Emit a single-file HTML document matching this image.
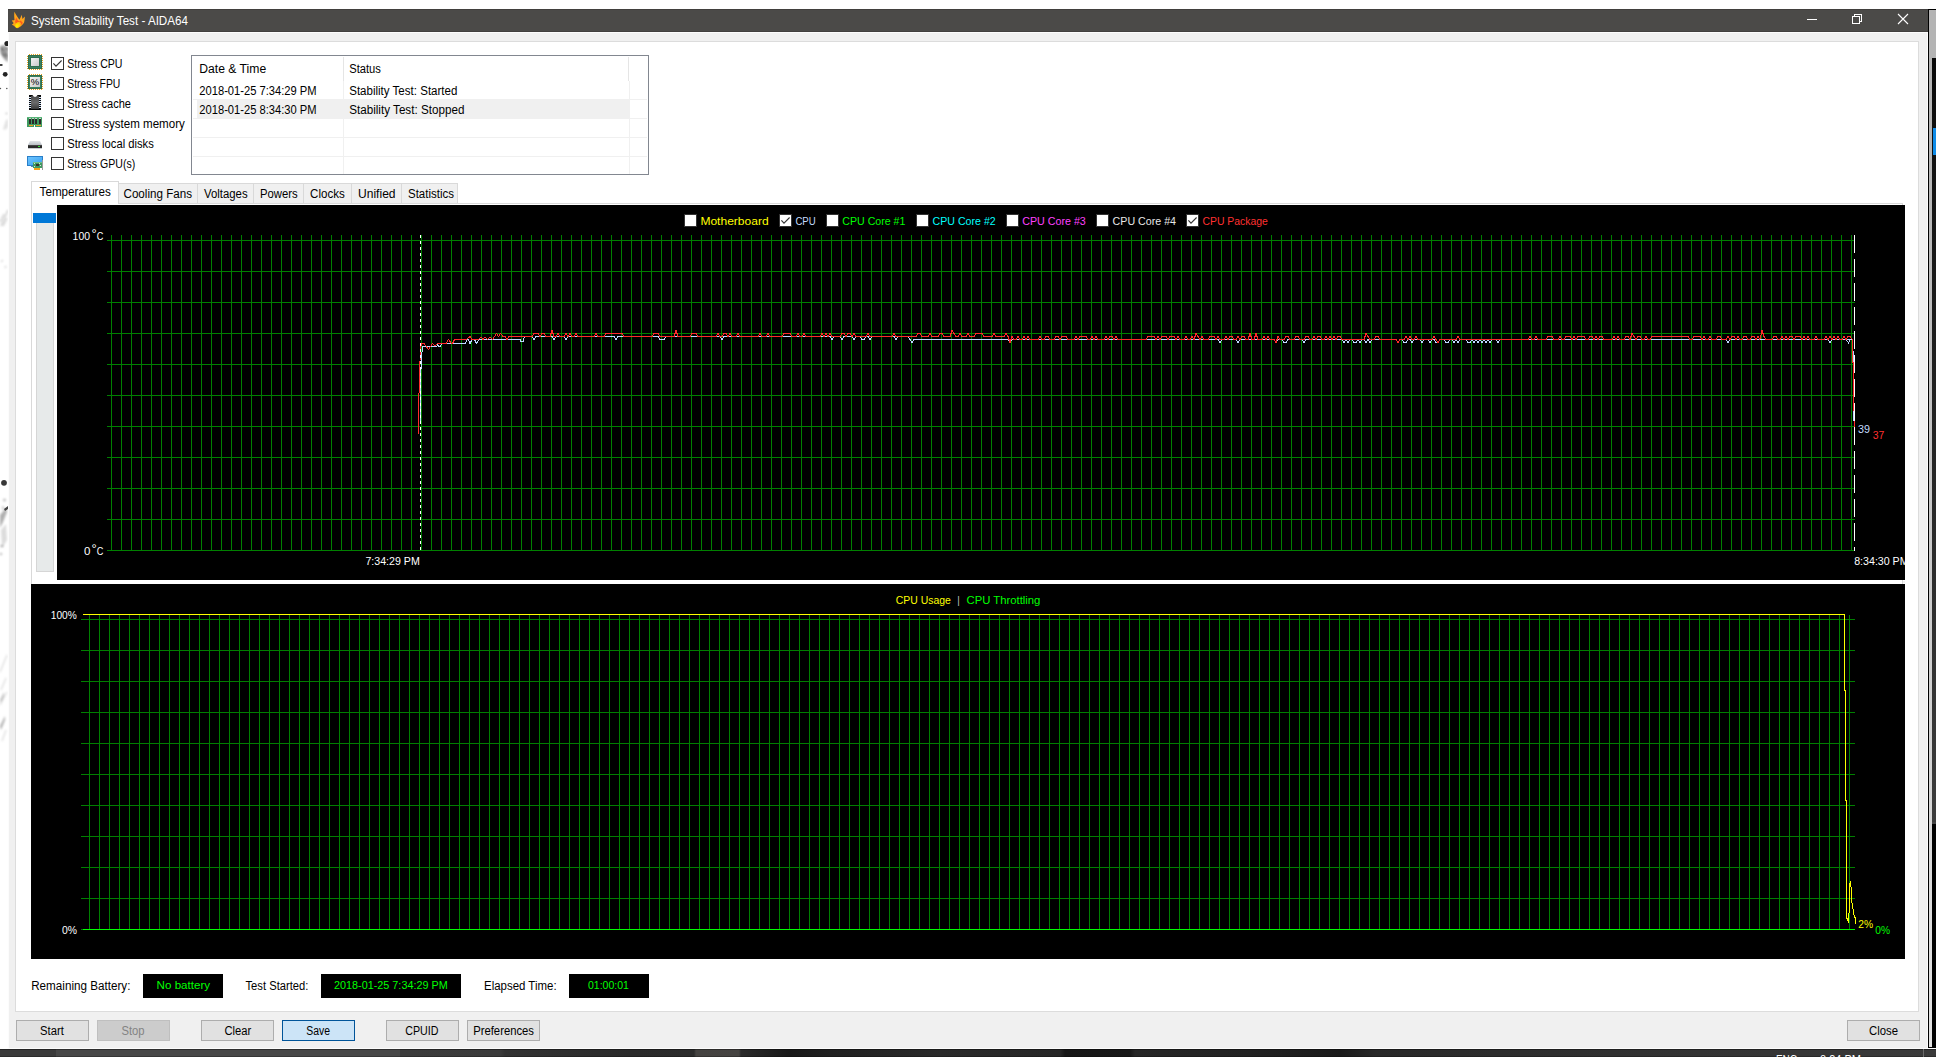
<!DOCTYPE html>
<html><head><meta charset="utf-8"><title>System Stability Test - AIDA64</title>
<style>
html,body{margin:0;padding:0;background:#fff;overflow:hidden}
svg{display:block;font-family:"Liberation Sans",sans-serif}
text{white-space:pre}
</style></head><body>
<svg width="1936" height="1058" viewBox="0 0 1936 1058" shape-rendering="crispEdges">
<rect x="0" y="0" width="1936" height="1058" fill="#ffffff"/>
<defs><filter id="bl" x="-50%" y="-50%" width="200%" height="200%"><feGaussianBlur stdDeviation="0.45"/></filter><filter id="bl2" x="-50%" y="-50%" width="200%" height="200%"><feGaussianBlur stdDeviation="0.8"/></filter></defs>
<g shape-rendering="auto">
<g filter="url(#bl2)">
<path d="M0 46 L4 45 L8 48 L8 62 L5 60 L2 56 L0 52Z" fill="#8a8a8a" opacity="0.8"/>
<path d="M1 48 L4 51 M5 53 L8 57 M2 53 L5 57 M6 47 L8 50" stroke="#3c3c3c" stroke-width="1.2" fill="none" opacity="0.8"/>
<path d="M0 515 L6 508 L7 512 L3 522 L0 528Z" fill="#9c9c9c" opacity="0.8"/>
<path d="M1 530 L6 524 L7 540 L2 548Z" fill="#dcdcdc"/>
<ellipse cx="4.5" cy="500" rx="1.4" ry="1.6" fill="#bdbdbd"/><ellipse cx="3" cy="508" rx="1" ry="2.2" fill="#c8c8c8"/>
<ellipse cx="2" cy="546" rx="1.6" ry="1" fill="#9a9a9a"/><ellipse cx="1" cy="554" rx="1.2" ry="1" fill="#aaa"/>
<path d="M3 129 L6 120 L8 119 L8 127 L5 130Z" fill="#e2e2e2"/>
<circle cx="6.5" cy="113.5" r="0.8" fill="#9a9a9a"/>
<path d="M1 226 L8 210 M0 222 L4 214 M3 226 L7 218" stroke="#8c8c8c" stroke-width="0.8" fill="none" opacity="0.8"/>
<path d="M1 262 L3 260 M5 268 L6 266" stroke="#aaa" stroke-width="0.8" fill="none"/>
<path d="M0 672 L7 655 M1 690 L6 678 M0 705 L7 692 M2 741 L6 730" stroke="#bdbdbd" stroke-width="0.7" fill="none"/>
<path d="M0 726 L5 716 L5 720 L1 730Z" fill="#9a9a9a" opacity="0.8"/>
<path d="M0 700 L4 692 L4 696 L1 703Z" fill="#b0b0b0" opacity="0.8"/>
</g>
<g filter="url(#bl)">
<circle cx="7" cy="43.5" r="2.6" fill="#222"/>
<ellipse cx="1" cy="65" rx="1.8" ry="1" fill="#333"/>
<circle cx="5.2" cy="74.3" r="2.4" fill="#222"/>
<circle cx="0.4" cy="88.5" r="0.8" fill="#555"/><circle cx="6.8" cy="88.5" r="0.8" fill="#555"/>
<circle cx="4" cy="482.8" r="2.9" fill="#383838"/>
<path d="M4 509 L8 506 L8 509 L5 511Z" fill="#444"/>
</g>
</g>
<defs><linearGradient id="rs1" gradientUnits="userSpaceOnUse" x1="0" y1="58" x2="0" y2="822"><stop offset="0" stop-color="#080808"/><stop offset="0.12" stop-color="#111111"/><stop offset="1" stop-color="#3c3c3c"/></linearGradient><linearGradient id="rs2" gradientUnits="userSpaceOnUse" x1="0" y1="10" x2="0" y2="1047"><stop offset="0" stop-color="#b2b2b2"/><stop offset="0.2" stop-color="#b8b8b8"/><stop offset="1" stop-color="#e2e2e2"/></linearGradient></defs>
<rect x="1928" y="9" width="8" height="1039" fill="#000000"/>
<rect x="1929" y="10" width="7" height="48" fill="#b4b4b4"/>
<rect x="1929" y="58" width="3" height="989" fill="url(#rs2)"/>
<rect x="1932" y="58" width="4" height="764" fill="url(#rs1)"/>
<rect x="1932" y="822" width="4" height="2" fill="#454545"/>
<rect x="1933" y="128" width="3" height="27" fill="#0f8ce8"/>
<defs><linearGradient id="tbg" gradientUnits="userSpaceOnUse" x1="0" y1="0" x2="1936" y2="0"><stop offset="0.00000" stop-color="#3a3a3a"/><stop offset="0.02893" stop-color="#3a3a3a"/><stop offset="0.02898" stop-color="#474747"/><stop offset="0.20661" stop-color="#474747"/><stop offset="0.20666" stop-color="#3b3b3b"/><stop offset="0.25826" stop-color="#3a3a3a"/><stop offset="0.26085" stop-color="#323232"/><stop offset="0.29184" stop-color="#2e2e2e"/><stop offset="0.32541" stop-color="#2a2a2a"/><stop offset="0.35847" stop-color="#2b2b2b"/><stop offset="0.35950" stop-color="#444240"/><stop offset="0.38171" stop-color="#454341"/><stop offset="0.38275" stop-color="#2a2a2a"/><stop offset="0.40806" stop-color="#181818"/><stop offset="0.42872" stop-color="#202020"/><stop offset="0.48554" stop-color="#2a2a2a"/><stop offset="0.54752" stop-color="#262626"/><stop offset="0.55010" stop-color="#161616"/><stop offset="0.58368" stop-color="#181818"/><stop offset="0.58626" stop-color="#262626"/><stop offset="0.64566" stop-color="#222222"/><stop offset="0.69215" stop-color="#1a1a1a"/><stop offset="0.71023" stop-color="#282828"/><stop offset="0.87810" stop-color="#333333"/><stop offset="1.00000" stop-color="#3a3a3a"/></linearGradient></defs>
<rect x="0" y="1049" width="1936" height="8" fill="url(#tbg)"/>
<rect x="0" y="1049" width="1936" height="1" fill="#000000" opacity="0.35"/>
<rect x="0" y="1056" width="1936" height="1" fill="#000000" opacity="0.25"/>
<rect x="1923" y="1049" width="1" height="8" fill="#6a6a6a"/>
<clipPath id="tb"><rect x="0" y="1049" width="1936" height="8"/></clipPath>
<g clip-path="url(#tb)" shape-rendering="auto">
<text x="1776" y="1064" font-size="12.5" fill="#fff" textLength="21.5" lengthAdjust="spacingAndGlyphs">ENG</text>
<text x="1820" y="1064" font-size="12.5" fill="#fff" textLength="41" lengthAdjust="spacingAndGlyphs">8:34 PM</text>
</g>
<rect x="8" y="9" width="1920" height="23" fill="#4b4a48"/>
<rect x="8" y="9" width="1920" height="1" fill="#413f3d"/>
<rect x="8" y="31" width="1920" height="1" fill="#413f3d"/>
<rect x="8" y="32" width="1920" height="1017" fill="#fcfcfc"/>
<rect x="9" y="33" width="1918" height="1015" fill="#f0f0f0"/>
<rect x="15" y="41" width="1904" height="971" fill="#dcdcdc"/>
<rect x="16" y="42" width="1902" height="969" fill="#ffffff"/>
<g shape-rendering="auto">
<defs><radialGradient id="fl" gradientUnits="userSpaceOnUse" cx="16.9" cy="26.3" r="5.2"><stop offset="0" stop-color="#fff200"/><stop offset="0.45" stop-color="#ffd400"/><stop offset="1" stop-color="#ffa61a"/></radialGradient><filter id="fb" x="-20%" y="-20%" width="140%" height="140%"><feGaussianBlur stdDeviation="0.35"/></filter></defs>
<g filter="url(#fb)">
<path d="M14.3 11.7 C15.4 13.4 16.2 15 17.2 16.6 C18 17.8 18.8 18.8 19.4 19.7 C20.2 18.4 21 16.6 21.6 14.8 C22 16.4 22.2 17.8 22.5 19 C23.2 18 24 17.2 24.9 16.5 C24.8 18.6 24.6 20.6 24.1 22.5 C23.2 24.4 21.4 26 19.4 27.2 C18.4 27.9 17.3 28.3 16.5 28.1 C15.4 27.5 14.6 26.6 14 25.8 C13.2 25.6 12.5 25.1 11.8 24.5 C12.6 24.2 13.2 23.6 13.6 22.9 C12.8 22.2 12.2 21.3 11.8 20.3 C12.8 20.5 13.7 20.4 14.5 20 C14.2 17.4 14 14.6 14.3 11.7Z" fill="#ffa51c"/>
<path d="M16.2 17.6 C16.9 19.2 18 20.6 19.2 21.6 C20 21.4 20.6 20.8 21 20.2 C21.2 21.2 21.6 21.8 22.4 22 C22.8 22.6 22.6 23.4 22 24.2 C20.8 25 19 25.4 17.4 25 C16 24.4 15.2 23.2 15.2 21.6 C15.3 20.2 15.7 18.8 16.2 17.6Z" fill="#ff5a1a"/>
<path d="M17.6 22.2 C19 21.8 20.6 22.4 21 23.4 C21 24.6 20 25.8 18.8 26.8 C17.8 27.6 16.9 28 16.4 27.8 C15.6 27.2 15.1 26.2 15.2 25.2 C15.6 23.8 16.4 22.6 17.6 22.2Z" fill="url(#fl)"/>
</g>
</g>
<g shape-rendering="auto">
<text x="31" y="24.6" font-size="12.5" fill="#ffffff" textLength="157" lengthAdjust="spacingAndGlyphs">System Stability Test - AIDA64</text>
</g>
<rect x="1807" y="19" width="10" height="1" fill="#ffffff"/>
<g fill="none" stroke="#ffffff" stroke-width="1">
<rect x="1852.5" y="16.5" width="7" height="7"/>
<path d="M1854.5 16.5 V14.5 H1861.5 V21.5 H1859.5"/>
</g>
<g shape-rendering="auto"><path d="M1898 14 L1908 24 M1908 14 L1898 24" stroke="#ffffff" stroke-width="1.1" fill="none"/></g>
<rect x="51" y="57" width="13" height="13" fill="#333333"/>
<rect x="52" y="58" width="11" height="11" fill="#ffffff"/>
<g shape-rendering="auto"><path d="M53.4 63.3 L56 66.2 L61.6 60.5" fill="none" stroke="#333" stroke-width="1.1"/></g>
<g shape-rendering="auto">
<text x="67.2" y="68" font-size="12.5" fill="#000" textLength="55.3" lengthAdjust="spacingAndGlyphs">Stress CPU</text>
</g>
<rect x="51" y="77" width="13" height="13" fill="#333333"/>
<rect x="52" y="78" width="11" height="11" fill="#ffffff"/>
<g shape-rendering="auto">
<text x="67.2" y="88" font-size="12.5" fill="#000" textLength="53.2" lengthAdjust="spacingAndGlyphs">Stress FPU</text>
</g>
<rect x="51" y="97" width="13" height="13" fill="#333333"/>
<rect x="52" y="98" width="11" height="11" fill="#ffffff"/>
<g shape-rendering="auto">
<text x="67.2" y="108" font-size="12.5" fill="#000" textLength="63.8" lengthAdjust="spacingAndGlyphs">Stress cache</text>
</g>
<rect x="51" y="117" width="13" height="13" fill="#333333"/>
<rect x="52" y="118" width="11" height="11" fill="#ffffff"/>
<g shape-rendering="auto">
<text x="67.2" y="128" font-size="12.5" fill="#000" textLength="117.6" lengthAdjust="spacingAndGlyphs">Stress system memory</text>
</g>
<rect x="51" y="137" width="13" height="13" fill="#333333"/>
<rect x="52" y="138" width="11" height="11" fill="#ffffff"/>
<g shape-rendering="auto">
<text x="67.2" y="148" font-size="12.5" fill="#000" textLength="86.6" lengthAdjust="spacingAndGlyphs">Stress local disks</text>
</g>
<rect x="51" y="157" width="13" height="13" fill="#333333"/>
<rect x="52" y="158" width="11" height="11" fill="#ffffff"/>
<g shape-rendering="auto">
<text x="67.2" y="168" font-size="12.5" fill="#000" textLength="68" lengthAdjust="spacingAndGlyphs">Stress GPU(s)</text>
</g>
<defs><linearGradient id="sil" x1="0" y1="0" x2="1" y2="1"><stop offset="0" stop-color="#f4f4f4"/><stop offset="1" stop-color="#c9c9c9"/></linearGradient><linearGradient id="chipg" x1="0" y1="0" x2="0" y2="1"><stop offset="0" stop-color="#4a4a4a"/><stop offset="0.5" stop-color="#6a6a6a"/><stop offset="1" stop-color="#3c3c3c"/></linearGradient><linearGradient id="mon" x1="0" y1="0" x2="1" y2="1"><stop offset="0" stop-color="#6cc4ff"/><stop offset="1" stop-color="#3aa0f0"/></linearGradient><linearGradient id="dsk" x1="0" y1="0" x2="0" y2="1"><stop offset="0" stop-color="#e2e5e8"/><stop offset="1" stop-color="#b9bec4"/></linearGradient></defs>
<rect x="29" y="54" width="1" height="1" fill="#e6a11f"/>
<rect x="29" y="69" width="1" height="1" fill="#e6a11f"/>
<rect x="27" y="56" width="1" height="1" fill="#e6a11f"/>
<rect x="42" y="56" width="1" height="1" fill="#e6a11f"/>
<rect x="31" y="54" width="1" height="1" fill="#e6a11f"/>
<rect x="31" y="69" width="1" height="1" fill="#e6a11f"/>
<rect x="27" y="58" width="1" height="1" fill="#e6a11f"/>
<rect x="42" y="58" width="1" height="1" fill="#e6a11f"/>
<rect x="33" y="54" width="1" height="1" fill="#e6a11f"/>
<rect x="33" y="69" width="1" height="1" fill="#e6a11f"/>
<rect x="27" y="60" width="1" height="1" fill="#e6a11f"/>
<rect x="42" y="60" width="1" height="1" fill="#e6a11f"/>
<rect x="35" y="54" width="1" height="1" fill="#e6a11f"/>
<rect x="35" y="69" width="1" height="1" fill="#e6a11f"/>
<rect x="27" y="62" width="1" height="1" fill="#e6a11f"/>
<rect x="42" y="62" width="1" height="1" fill="#e6a11f"/>
<rect x="37" y="54" width="1" height="1" fill="#e6a11f"/>
<rect x="37" y="69" width="1" height="1" fill="#e6a11f"/>
<rect x="27" y="64" width="1" height="1" fill="#e6a11f"/>
<rect x="42" y="64" width="1" height="1" fill="#e6a11f"/>
<rect x="39" y="54" width="1" height="1" fill="#e6a11f"/>
<rect x="39" y="69" width="1" height="1" fill="#e6a11f"/>
<rect x="27" y="66" width="1" height="1" fill="#e6a11f"/>
<rect x="42" y="66" width="1" height="1" fill="#e6a11f"/>
<rect x="41" y="54" width="1" height="1" fill="#e6a11f"/>
<rect x="41" y="69" width="1" height="1" fill="#e6a11f"/>
<rect x="27" y="68" width="1" height="1" fill="#e6a11f"/>
<rect x="42" y="68" width="1" height="1" fill="#e6a11f"/>
<rect x="28" y="55" width="14" height="14" fill="#2f6e50"/>
<rect x="29" y="56" width="12" height="12" fill="#3a7f5d"/>
<rect x="30" y="57" width="10" height="10" fill="#2f6e50"/>
<rect x="31" y="58" width="8" height="8" fill="url(#sil)"/>
<rect x="29" y="74" width="1" height="1" fill="#e6a11f"/>
<rect x="29" y="89" width="1" height="1" fill="#e6a11f"/>
<rect x="27" y="76" width="1" height="1" fill="#e6a11f"/>
<rect x="42" y="76" width="1" height="1" fill="#e6a11f"/>
<rect x="31" y="74" width="1" height="1" fill="#e6a11f"/>
<rect x="31" y="89" width="1" height="1" fill="#e6a11f"/>
<rect x="27" y="78" width="1" height="1" fill="#e6a11f"/>
<rect x="42" y="78" width="1" height="1" fill="#e6a11f"/>
<rect x="33" y="74" width="1" height="1" fill="#e6a11f"/>
<rect x="33" y="89" width="1" height="1" fill="#e6a11f"/>
<rect x="27" y="80" width="1" height="1" fill="#e6a11f"/>
<rect x="42" y="80" width="1" height="1" fill="#e6a11f"/>
<rect x="35" y="74" width="1" height="1" fill="#e6a11f"/>
<rect x="35" y="89" width="1" height="1" fill="#e6a11f"/>
<rect x="27" y="82" width="1" height="1" fill="#e6a11f"/>
<rect x="42" y="82" width="1" height="1" fill="#e6a11f"/>
<rect x="37" y="74" width="1" height="1" fill="#e6a11f"/>
<rect x="37" y="89" width="1" height="1" fill="#e6a11f"/>
<rect x="27" y="84" width="1" height="1" fill="#e6a11f"/>
<rect x="42" y="84" width="1" height="1" fill="#e6a11f"/>
<rect x="39" y="74" width="1" height="1" fill="#e6a11f"/>
<rect x="39" y="89" width="1" height="1" fill="#e6a11f"/>
<rect x="27" y="86" width="1" height="1" fill="#e6a11f"/>
<rect x="42" y="86" width="1" height="1" fill="#e6a11f"/>
<rect x="41" y="74" width="1" height="1" fill="#e6a11f"/>
<rect x="41" y="89" width="1" height="1" fill="#e6a11f"/>
<rect x="27" y="88" width="1" height="1" fill="#e6a11f"/>
<rect x="42" y="88" width="1" height="1" fill="#e6a11f"/>
<rect x="28" y="75" width="14" height="14" fill="#2f6e50"/>
<rect x="29" y="76" width="12" height="12" fill="#3a7f5d"/>
<rect x="30" y="77" width="10" height="10" fill="url(#sil)"/>
<g shape-rendering="auto">
<text x="30.8" y="85.4" font-size="9.5" fill="#000" textLength="8.4" lengthAdjust="spacingAndGlyphs">%</text>
</g>
<rect x="29" y="95" width="12" height="15" fill="#0a0a0a"/>
<rect x="31" y="96" width="8" height="13" fill="url(#chipg)"/>
<g shape-rendering="auto"><path d="M32.4 95 Q35 99 37.6 95 Z" fill="#ffffff"/></g>
<rect x="29" y="97" width="2" height="1" fill="#cfe0f5"/>
<rect x="39" y="97" width="2" height="1" fill="#cfe0f5"/>
<rect x="29" y="99" width="2" height="1" fill="#cfe0f5"/>
<rect x="39" y="99" width="2" height="1" fill="#cfe0f5"/>
<rect x="29" y="101" width="2" height="1" fill="#cfe0f5"/>
<rect x="39" y="101" width="2" height="1" fill="#cfe0f5"/>
<rect x="29" y="103" width="2" height="1" fill="#cfe0f5"/>
<rect x="39" y="103" width="2" height="1" fill="#cfe0f5"/>
<rect x="29" y="105" width="2" height="1" fill="#cfe0f5"/>
<rect x="39" y="105" width="2" height="1" fill="#cfe0f5"/>
<rect x="29" y="107" width="2" height="1" fill="#cfe0f5"/>
<rect x="39" y="107" width="2" height="1" fill="#cfe0f5"/>
<rect x="27" y="117" width="15" height="10" fill="#3f9a60"/>
<rect x="27" y="117" width="15" height="1" fill="#5ab47a"/>
<rect x="29.0" y="118" width="2" height="1" fill="#bcd9c4"/>
<rect x="29.0" y="119" width="2" height="5" fill="#2a2a2a"/>
<rect x="32.2" y="118" width="2" height="1" fill="#bcd9c4"/>
<rect x="32.2" y="119" width="2" height="5" fill="#2a2a2a"/>
<rect x="35.4" y="118" width="2" height="1" fill="#bcd9c4"/>
<rect x="35.4" y="119" width="2" height="5" fill="#2a2a2a"/>
<rect x="38.6" y="118" width="2" height="1" fill="#bcd9c4"/>
<rect x="38.6" y="119" width="2" height="5" fill="#2a2a2a"/>
<rect x="28.5" y="125" width="4.5" height="1" fill="#f0a020"/>
<rect x="36" y="125" width="4.5" height="1" fill="#f0a020"/>
<rect x="34" y="125" width="1" height="2" fill="#ffffff"/>
<g shape-rendering="auto"><path d="M30 141 H40 L42 145 H28Z" fill="url(#dsk)"/></g>
<rect x="28" y="145" width="14" height="3" fill="#2a2a2a"/>
<rect x="28" y="148" width="14" height="1" fill="#c8ccd0"/>
<rect x="28" y="145" width="14" height="1" fill="#444"/>
<rect x="38" y="146" width="2" height="1" fill="#38e038"/>
<rect x="27" y="156" width="16" height="10" fill="#2a7fc8"/>
<rect x="28" y="157" width="14" height="8" fill="url(#mon)"/>
<rect x="31" y="166" width="4" height="1" fill="#5580b0"/>
<rect x="42" y="160" width="1" height="10" fill="#9a9a9a"/>
<rect x="33" y="162" width="9" height="6" fill="#3f9a60"/>
<rect x="33" y="162" width="9" height="1" fill="#6fc08a"/>
<rect x="36" y="164" width="3" height="2" fill="#333"/>
<rect x="34" y="163" width="1" height="1" fill="#ddd"/>
<rect x="39" y="163" width="1" height="1" fill="#ddd"/>
<rect x="34" y="166" width="1" height="1" fill="#ddd"/>
<rect x="40" y="165" width="1" height="1" fill="#ddd"/>
<rect x="34" y="168" width="6" height="2" fill="#f5a31a"/>
<rect x="191" y="55" width="458" height="120" fill="#828790"/>
<rect x="192" y="56" width="456" height="118" fill="#ffffff"/>
<rect x="343" y="57" width="1" height="24" fill="#e5e5e5"/>
<rect x="628" y="57" width="1" height="24" fill="#e5e5e5"/>
<rect x="197" y="100" width="432" height="19" fill="#f0f0f0"/>
<rect x="193" y="99" width="454" height="1" fill="#f0f0f0"/>
<rect x="193" y="118" width="454" height="1" fill="#f0f0f0"/>
<rect x="193" y="137" width="454" height="1" fill="#f0f0f0"/>
<rect x="193" y="156" width="454" height="1" fill="#f0f0f0"/>
<rect x="343" y="81" width="1" height="93" fill="#f0f0f0"/>
<rect x="629" y="81" width="1" height="93" fill="#f0f0f0"/>
<g shape-rendering="auto">
<text x="199.3" y="72.9" font-size="12.5" fill="#000" textLength="66.9" lengthAdjust="spacingAndGlyphs">Date &amp; Time</text>
<text x="349.2" y="72.9" font-size="12.5" fill="#000" textLength="31.7" lengthAdjust="spacingAndGlyphs">Status</text>
<text x="199.3" y="94.6" font-size="12.5" fill="#000" textLength="117.3" lengthAdjust="spacingAndGlyphs">2018-01-25 7:34:29 PM</text>
<text x="349.2" y="94.6" font-size="12.5" fill="#000" textLength="108.2" lengthAdjust="spacingAndGlyphs">Stability Test: Started</text>
<text x="199.3" y="113.8" font-size="12.5" fill="#000" textLength="117.3" lengthAdjust="spacingAndGlyphs">2018-01-25 8:34:30 PM</text>
<text x="349.2" y="113.8" font-size="12.5" fill="#000" textLength="115.2" lengthAdjust="spacingAndGlyphs">Stability Test: Stopped</text>
</g>
<rect x="31" y="181" width="1" height="403" fill="#d9d9d9"/>
<rect x="31" y="203" width="1872" height="1" fill="#d9d9d9"/>
<rect x="1902" y="203" width="1" height="2" fill="#d9d9d9"/>
<rect x="118" y="183" width="340" height="21" fill="#d9d9d9"/>
<rect x="119" y="184" width="78" height="19" fill="#f0f0f0"/>
<rect x="198" y="184" width="55" height="19" fill="#f0f0f0"/>
<rect x="254" y="184" width="49" height="19" fill="#f0f0f0"/>
<rect x="304" y="184" width="47" height="19" fill="#f0f0f0"/>
<rect x="352" y="184" width="49" height="19" fill="#f0f0f0"/>
<rect x="402" y="184" width="55" height="19" fill="#f0f0f0"/>
<rect x="31" y="181" width="88" height="23" fill="#d9d9d9"/>
<rect x="32" y="182" width="86" height="23" fill="#ffffff"/>
<g shape-rendering="auto">
<text x="39.6" y="195.6" font-size="12.5" fill="#000" textLength="71.2" lengthAdjust="spacingAndGlyphs">Temperatures</text>
<text x="123.5" y="197.8" font-size="12.5" fill="#000" textLength="68.5" lengthAdjust="spacingAndGlyphs">Cooling Fans</text>
<text x="204" y="197.8" font-size="12.5" fill="#000" textLength="43.6" lengthAdjust="spacingAndGlyphs">Voltages</text>
<text x="260" y="197.8" font-size="12.5" fill="#000" textLength="37.7" lengthAdjust="spacingAndGlyphs">Powers</text>
<text x="310.1" y="197.8" font-size="12.5" fill="#000" textLength="34.7" lengthAdjust="spacingAndGlyphs">Clocks</text>
<text x="358" y="197.8" font-size="12.5" fill="#000" textLength="37.6" lengthAdjust="spacingAndGlyphs">Unified</text>
<text x="408" y="197.8" font-size="12.5" fill="#000" textLength="45.9" lengthAdjust="spacingAndGlyphs">Statistics</text>
</g>
<rect x="36" y="218" width="18" height="354" fill="#d6d6d6"/>
<rect x="37" y="219" width="16" height="352" fill="#e7eaea"/>
<rect x="33" y="213" width="23" height="10" fill="#0078d7"/>
<rect x="57" y="205" width="1848" height="375" fill="#000000"/>
<rect x="111" y="235" width="1" height="316" fill="#008000"/>
<rect x="121" y="235" width="1" height="316" fill="#008000"/>
<rect x="131" y="235" width="1" height="316" fill="#008000"/>
<rect x="141" y="235" width="1" height="316" fill="#008000"/>
<rect x="151" y="235" width="1" height="316" fill="#008000"/>
<rect x="161" y="235" width="1" height="316" fill="#008000"/>
<rect x="171" y="235" width="1" height="316" fill="#008000"/>
<rect x="181" y="235" width="1" height="316" fill="#008000"/>
<rect x="191" y="235" width="1" height="316" fill="#008000"/>
<rect x="201" y="235" width="1" height="316" fill="#008000"/>
<rect x="211" y="235" width="1" height="316" fill="#008000"/>
<rect x="221" y="235" width="1" height="316" fill="#008000"/>
<rect x="231" y="235" width="1" height="316" fill="#008000"/>
<rect x="241" y="235" width="1" height="316" fill="#008000"/>
<rect x="251" y="235" width="1" height="316" fill="#008000"/>
<rect x="261" y="235" width="1" height="316" fill="#008000"/>
<rect x="271" y="235" width="1" height="316" fill="#008000"/>
<rect x="281" y="235" width="1" height="316" fill="#008000"/>
<rect x="291" y="235" width="1" height="316" fill="#008000"/>
<rect x="301" y="235" width="1" height="316" fill="#008000"/>
<rect x="311" y="235" width="1" height="316" fill="#008000"/>
<rect x="321" y="235" width="1" height="316" fill="#008000"/>
<rect x="331" y="235" width="1" height="316" fill="#008000"/>
<rect x="341" y="235" width="1" height="316" fill="#008000"/>
<rect x="351" y="235" width="1" height="316" fill="#008000"/>
<rect x="361" y="235" width="1" height="316" fill="#008000"/>
<rect x="371" y="235" width="1" height="316" fill="#008000"/>
<rect x="381" y="235" width="1" height="316" fill="#008000"/>
<rect x="391" y="235" width="1" height="316" fill="#008000"/>
<rect x="401" y="235" width="1" height="316" fill="#008000"/>
<rect x="411" y="235" width="1" height="316" fill="#008000"/>
<rect x="421" y="235" width="1" height="316" fill="#008000"/>
<rect x="431" y="235" width="1" height="316" fill="#008000"/>
<rect x="441" y="235" width="1" height="316" fill="#008000"/>
<rect x="451" y="235" width="1" height="316" fill="#008000"/>
<rect x="461" y="235" width="1" height="316" fill="#008000"/>
<rect x="471" y="235" width="1" height="316" fill="#008000"/>
<rect x="481" y="235" width="1" height="316" fill="#008000"/>
<rect x="491" y="235" width="1" height="316" fill="#008000"/>
<rect x="501" y="235" width="1" height="316" fill="#008000"/>
<rect x="511" y="235" width="1" height="316" fill="#008000"/>
<rect x="521" y="235" width="1" height="316" fill="#008000"/>
<rect x="531" y="235" width="1" height="316" fill="#008000"/>
<rect x="541" y="235" width="1" height="316" fill="#008000"/>
<rect x="551" y="235" width="1" height="316" fill="#008000"/>
<rect x="561" y="235" width="1" height="316" fill="#008000"/>
<rect x="571" y="235" width="1" height="316" fill="#008000"/>
<rect x="581" y="235" width="1" height="316" fill="#008000"/>
<rect x="591" y="235" width="1" height="316" fill="#008000"/>
<rect x="601" y="235" width="1" height="316" fill="#008000"/>
<rect x="611" y="235" width="1" height="316" fill="#008000"/>
<rect x="621" y="235" width="1" height="316" fill="#008000"/>
<rect x="631" y="235" width="1" height="316" fill="#008000"/>
<rect x="641" y="235" width="1" height="316" fill="#008000"/>
<rect x="651" y="235" width="1" height="316" fill="#008000"/>
<rect x="661" y="235" width="1" height="316" fill="#008000"/>
<rect x="671" y="235" width="1" height="316" fill="#008000"/>
<rect x="681" y="235" width="1" height="316" fill="#008000"/>
<rect x="691" y="235" width="1" height="316" fill="#008000"/>
<rect x="701" y="235" width="1" height="316" fill="#008000"/>
<rect x="711" y="235" width="1" height="316" fill="#008000"/>
<rect x="721" y="235" width="1" height="316" fill="#008000"/>
<rect x="731" y="235" width="1" height="316" fill="#008000"/>
<rect x="741" y="235" width="1" height="316" fill="#008000"/>
<rect x="751" y="235" width="1" height="316" fill="#008000"/>
<rect x="761" y="235" width="1" height="316" fill="#008000"/>
<rect x="771" y="235" width="1" height="316" fill="#008000"/>
<rect x="781" y="235" width="1" height="316" fill="#008000"/>
<rect x="791" y="235" width="1" height="316" fill="#008000"/>
<rect x="801" y="235" width="1" height="316" fill="#008000"/>
<rect x="811" y="235" width="1" height="316" fill="#008000"/>
<rect x="821" y="235" width="1" height="316" fill="#008000"/>
<rect x="831" y="235" width="1" height="316" fill="#008000"/>
<rect x="841" y="235" width="1" height="316" fill="#008000"/>
<rect x="851" y="235" width="1" height="316" fill="#008000"/>
<rect x="861" y="235" width="1" height="316" fill="#008000"/>
<rect x="871" y="235" width="1" height="316" fill="#008000"/>
<rect x="881" y="235" width="1" height="316" fill="#008000"/>
<rect x="891" y="235" width="1" height="316" fill="#008000"/>
<rect x="901" y="235" width="1" height="316" fill="#008000"/>
<rect x="911" y="235" width="1" height="316" fill="#008000"/>
<rect x="921" y="235" width="1" height="316" fill="#008000"/>
<rect x="931" y="235" width="1" height="316" fill="#008000"/>
<rect x="941" y="235" width="1" height="316" fill="#008000"/>
<rect x="951" y="235" width="1" height="316" fill="#008000"/>
<rect x="961" y="235" width="1" height="316" fill="#008000"/>
<rect x="971" y="235" width="1" height="316" fill="#008000"/>
<rect x="981" y="235" width="1" height="316" fill="#008000"/>
<rect x="991" y="235" width="1" height="316" fill="#008000"/>
<rect x="1001" y="235" width="1" height="316" fill="#008000"/>
<rect x="1011" y="235" width="1" height="316" fill="#008000"/>
<rect x="1021" y="235" width="1" height="316" fill="#008000"/>
<rect x="1031" y="235" width="1" height="316" fill="#008000"/>
<rect x="1041" y="235" width="1" height="316" fill="#008000"/>
<rect x="1051" y="235" width="1" height="316" fill="#008000"/>
<rect x="1061" y="235" width="1" height="316" fill="#008000"/>
<rect x="1071" y="235" width="1" height="316" fill="#008000"/>
<rect x="1081" y="235" width="1" height="316" fill="#008000"/>
<rect x="1091" y="235" width="1" height="316" fill="#008000"/>
<rect x="1101" y="235" width="1" height="316" fill="#008000"/>
<rect x="1111" y="235" width="1" height="316" fill="#008000"/>
<rect x="1121" y="235" width="1" height="316" fill="#008000"/>
<rect x="1131" y="235" width="1" height="316" fill="#008000"/>
<rect x="1141" y="235" width="1" height="316" fill="#008000"/>
<rect x="1151" y="235" width="1" height="316" fill="#008000"/>
<rect x="1161" y="235" width="1" height="316" fill="#008000"/>
<rect x="1171" y="235" width="1" height="316" fill="#008000"/>
<rect x="1181" y="235" width="1" height="316" fill="#008000"/>
<rect x="1191" y="235" width="1" height="316" fill="#008000"/>
<rect x="1201" y="235" width="1" height="316" fill="#008000"/>
<rect x="1211" y="235" width="1" height="316" fill="#008000"/>
<rect x="1221" y="235" width="1" height="316" fill="#008000"/>
<rect x="1231" y="235" width="1" height="316" fill="#008000"/>
<rect x="1241" y="235" width="1" height="316" fill="#008000"/>
<rect x="1251" y="235" width="1" height="316" fill="#008000"/>
<rect x="1261" y="235" width="1" height="316" fill="#008000"/>
<rect x="1271" y="235" width="1" height="316" fill="#008000"/>
<rect x="1281" y="235" width="1" height="316" fill="#008000"/>
<rect x="1291" y="235" width="1" height="316" fill="#008000"/>
<rect x="1301" y="235" width="1" height="316" fill="#008000"/>
<rect x="1311" y="235" width="1" height="316" fill="#008000"/>
<rect x="1321" y="235" width="1" height="316" fill="#008000"/>
<rect x="1331" y="235" width="1" height="316" fill="#008000"/>
<rect x="1341" y="235" width="1" height="316" fill="#008000"/>
<rect x="1351" y="235" width="1" height="316" fill="#008000"/>
<rect x="1361" y="235" width="1" height="316" fill="#008000"/>
<rect x="1371" y="235" width="1" height="316" fill="#008000"/>
<rect x="1381" y="235" width="1" height="316" fill="#008000"/>
<rect x="1391" y="235" width="1" height="316" fill="#008000"/>
<rect x="1401" y="235" width="1" height="316" fill="#008000"/>
<rect x="1411" y="235" width="1" height="316" fill="#008000"/>
<rect x="1421" y="235" width="1" height="316" fill="#008000"/>
<rect x="1431" y="235" width="1" height="316" fill="#008000"/>
<rect x="1441" y="235" width="1" height="316" fill="#008000"/>
<rect x="1451" y="235" width="1" height="316" fill="#008000"/>
<rect x="1461" y="235" width="1" height="316" fill="#008000"/>
<rect x="1471" y="235" width="1" height="316" fill="#008000"/>
<rect x="1481" y="235" width="1" height="316" fill="#008000"/>
<rect x="1491" y="235" width="1" height="316" fill="#008000"/>
<rect x="1501" y="235" width="1" height="316" fill="#008000"/>
<rect x="1511" y="235" width="1" height="316" fill="#008000"/>
<rect x="1521" y="235" width="1" height="316" fill="#008000"/>
<rect x="1531" y="235" width="1" height="316" fill="#008000"/>
<rect x="1541" y="235" width="1" height="316" fill="#008000"/>
<rect x="1551" y="235" width="1" height="316" fill="#008000"/>
<rect x="1561" y="235" width="1" height="316" fill="#008000"/>
<rect x="1571" y="235" width="1" height="316" fill="#008000"/>
<rect x="1581" y="235" width="1" height="316" fill="#008000"/>
<rect x="1591" y="235" width="1" height="316" fill="#008000"/>
<rect x="1601" y="235" width="1" height="316" fill="#008000"/>
<rect x="1611" y="235" width="1" height="316" fill="#008000"/>
<rect x="1621" y="235" width="1" height="316" fill="#008000"/>
<rect x="1631" y="235" width="1" height="316" fill="#008000"/>
<rect x="1641" y="235" width="1" height="316" fill="#008000"/>
<rect x="1651" y="235" width="1" height="316" fill="#008000"/>
<rect x="1661" y="235" width="1" height="316" fill="#008000"/>
<rect x="1671" y="235" width="1" height="316" fill="#008000"/>
<rect x="1681" y="235" width="1" height="316" fill="#008000"/>
<rect x="1691" y="235" width="1" height="316" fill="#008000"/>
<rect x="1701" y="235" width="1" height="316" fill="#008000"/>
<rect x="1711" y="235" width="1" height="316" fill="#008000"/>
<rect x="1721" y="235" width="1" height="316" fill="#008000"/>
<rect x="1731" y="235" width="1" height="316" fill="#008000"/>
<rect x="1741" y="235" width="1" height="316" fill="#008000"/>
<rect x="1751" y="235" width="1" height="316" fill="#008000"/>
<rect x="1761" y="235" width="1" height="316" fill="#008000"/>
<rect x="1771" y="235" width="1" height="316" fill="#008000"/>
<rect x="1781" y="235" width="1" height="316" fill="#008000"/>
<rect x="1791" y="235" width="1" height="316" fill="#008000"/>
<rect x="1801" y="235" width="1" height="316" fill="#008000"/>
<rect x="1811" y="235" width="1" height="316" fill="#008000"/>
<rect x="1821" y="235" width="1" height="316" fill="#008000"/>
<rect x="1831" y="235" width="1" height="316" fill="#008000"/>
<rect x="1841" y="235" width="1" height="316" fill="#008000"/>
<rect x="1851" y="235" width="1" height="316" fill="#008000"/>
<rect x="107" y="240" width="1748" height="1" fill="#008000"/>
<rect x="107" y="271" width="1748" height="1" fill="#008000"/>
<rect x="107" y="302" width="1748" height="1" fill="#008000"/>
<rect x="107" y="333" width="1748" height="1" fill="#008000"/>
<rect x="107" y="364" width="1748" height="1" fill="#008000"/>
<rect x="107" y="395" width="1748" height="1" fill="#008000"/>
<rect x="107" y="426" width="1748" height="1" fill="#008000"/>
<rect x="107" y="457" width="1748" height="1" fill="#008000"/>
<rect x="107" y="488" width="1748" height="1" fill="#008000"/>
<rect x="107" y="519" width="1748" height="1" fill="#008000"/>
<rect x="107" y="550" width="1748" height="1" fill="#008000"/>
<rect x="684" y="214" width="13" height="13" fill="#333333"/>
<rect x="685" y="215" width="11" height="11" fill="#ffffff"/>
<g shape-rendering="auto">
<text x="700.4" y="224.8" font-size="11.5" fill="#ffff00" textLength="68.2" lengthAdjust="spacingAndGlyphs">Motherboard</text>
</g>
<rect x="779" y="214" width="13" height="13" fill="#333333"/>
<rect x="780" y="215" width="11" height="11" fill="#ffffff"/>
<g shape-rendering="auto"><path d="M781.4 220.3 L784 223.2 L789.6 217.5" fill="none" stroke="#333" stroke-width="1.1"/></g>
<g shape-rendering="auto">
<text x="795.4" y="224.8" font-size="11.5" fill="#c4dcff" textLength="20.3" lengthAdjust="spacingAndGlyphs">CPU</text>
</g>
<rect x="826" y="214" width="13" height="13" fill="#333333"/>
<rect x="827" y="215" width="11" height="11" fill="#ffffff"/>
<g shape-rendering="auto">
<text x="842.3" y="224.8" font-size="11.5" fill="#00ff00" textLength="63.1" lengthAdjust="spacingAndGlyphs">CPU Core #1</text>
</g>
<rect x="916" y="214" width="13" height="13" fill="#333333"/>
<rect x="917" y="215" width="11" height="11" fill="#ffffff"/>
<g shape-rendering="auto">
<text x="932.6" y="224.8" font-size="11.5" fill="#00ffff" textLength="63.1" lengthAdjust="spacingAndGlyphs">CPU Core #2</text>
</g>
<rect x="1006" y="214" width="13" height="13" fill="#333333"/>
<rect x="1007" y="215" width="11" height="11" fill="#ffffff"/>
<g shape-rendering="auto">
<text x="1022.2" y="224.8" font-size="11.5" fill="#ff40ff" textLength="63.6" lengthAdjust="spacingAndGlyphs">CPU Core #3</text>
</g>
<rect x="1096" y="214" width="13" height="13" fill="#333333"/>
<rect x="1097" y="215" width="11" height="11" fill="#ffffff"/>
<g shape-rendering="auto">
<text x="1112.6" y="224.8" font-size="11.5" fill="#e8e8e8" textLength="63.4" lengthAdjust="spacingAndGlyphs">CPU Core #4</text>
</g>
<rect x="1186" y="214" width="13" height="13" fill="#333333"/>
<rect x="1187" y="215" width="11" height="11" fill="#ffffff"/>
<g shape-rendering="auto"><path d="M1188.4 220.3 L1191 223.2 L1196.6 217.5" fill="none" stroke="#333" stroke-width="1.1"/></g>
<g shape-rendering="auto">
<text x="1202.5" y="224.8" font-size="11.5" fill="#ff3030" textLength="65.3" lengthAdjust="spacingAndGlyphs">CPU Package</text>
</g>
<g shape-rendering="auto">
<text y="239.8" font-size="11.5" fill="#ffffff"><tspan x="72.6" textLength="17.4" lengthAdjust="spacingAndGlyphs">100</tspan><tspan x="91.4" dy="-1.6" font-size="13">°</tspan><tspan x="96.8" dy="1.6" textLength="6.6" lengthAdjust="spacingAndGlyphs">C</tspan></text>
<text y="555" font-size="11.5" fill="#ffffff"><tspan x="83.9" textLength="6.4" lengthAdjust="spacingAndGlyphs">0</tspan><tspan x="91.4" dy="-1.6" font-size="13">°</tspan><tspan x="96.8" dy="1.6" textLength="6.6" lengthAdjust="spacingAndGlyphs">C</tspan></text>
<text x="365.4" y="565.2" font-size="11.5" fill="#ffffff" textLength="54.4" lengthAdjust="spacingAndGlyphs">7:34:29 PM</text>
<clipPath id="c1"><rect x="57" y="205" width="1848" height="375"/></clipPath>
<g clip-path="url(#c1)">
<text x="1854.2" y="565.2" font-size="11.5" fill="#ffffff" textLength="54.4" lengthAdjust="spacingAndGlyphs">8:34:30 PM</text>
</g>
<text x="1858" y="433" font-size="11.5" fill="#c4dcff" textLength="12" lengthAdjust="spacingAndGlyphs">39</text>
<text x="1872.8" y="439.3" font-size="11.5" fill="#ff3030" textLength="11.6" lengthAdjust="spacingAndGlyphs">37</text>
</g>
<polyline points="420.5,424.0 420.5,382.0 421.5,358.0 422.5,346.5 437.0,346.5 437.5,343.5 438.5,346.5 440.5,346.5 441.5,343.5 465.0,343.5 467.5,339.5 468.5,339.5 470.0,343.5 472.0,339.5 474.5,339.5 476.5,343.5 479.0,339.5 520.0,339.5 521.0,341.5 523.0,341.5 524.5,336.5 528.0,336.5 530.0,336.5 532.0,336.5 534.0,339.5 536.0,336.5 538.0,336.5 540.0,336.5 542.0,336.5 544.0,336.5 546.0,336.5 548.0,336.5 550.0,336.5 552.0,336.5 554.0,339.5 556.0,336.5 558.0,336.5 560.0,336.5 562.0,336.5 564.0,336.5 566.0,339.5 568.0,336.5 570.0,336.5 572.0,336.5 574.0,336.5 576.0,336.5 578.0,336.5 580.0,336.5 582.0,336.5 584.0,336.5 586.0,336.5 588.0,336.5 590.0,336.5 592.0,336.5 594.0,336.5 596.0,336.5 598.0,336.5 600.0,336.5 602.0,336.5 604.0,336.5 606.0,336.5 608.0,336.5 610.0,336.5 612.0,336.5 614.0,336.5 616.0,339.5 618.0,336.5 620.0,336.5 622.0,336.5 624.0,336.5 626.0,336.5 628.0,336.5 630.0,336.5 632.0,336.5 634.0,336.5 636.0,336.5 638.0,336.5 640.0,336.5 642.0,336.5 644.0,336.5 646.0,336.5 648.0,336.5 650.0,336.5 652.0,336.5 654.0,336.5 656.0,336.5 658.0,336.5 660.0,339.5 662.0,339.5 664.0,339.5 666.0,336.5 668.0,336.5 670.0,336.5 672.0,336.5 674.0,336.5 676.0,336.5 678.0,336.5 680.0,336.5 682.0,336.5 684.0,336.5 686.0,336.5 688.0,336.5 690.0,336.5 692.0,336.5 694.0,336.5 696.0,336.5 698.0,336.5 700.0,336.5 702.0,336.5 704.0,336.5 706.0,336.5 708.0,336.5 710.0,336.5 712.0,336.5 714.0,336.5 716.0,336.5 718.0,336.5 720.0,336.5 722.0,339.5 724.0,336.5 726.0,336.5 728.0,336.5 730.0,336.5 732.0,336.5 734.0,336.5 736.0,336.5 738.0,336.5 740.0,336.5 742.0,336.5 744.0,336.5 746.0,336.5 748.0,336.5 750.0,336.5 752.0,336.5 754.0,336.5 756.0,336.5 758.0,336.5 760.0,336.5 762.0,336.5 764.0,336.5 766.0,336.5 768.0,336.5 770.0,336.5 772.0,336.5 774.0,336.5 776.0,336.5 778.0,336.5 780.0,336.5 782.0,336.5 784.0,336.5 786.0,336.5 788.0,336.5 790.0,336.5 792.0,336.5 794.0,336.5 796.0,336.5 798.0,336.5 800.0,336.5 802.0,336.5 804.0,336.5 806.0,336.5 808.0,336.5 810.0,336.5 812.0,336.5 814.0,336.5 816.0,336.5 818.0,336.5 820.0,336.5 822.0,336.5 824.0,336.5 826.0,336.5 828.0,336.5 830.0,336.5 832.0,339.5 834.0,336.5 836.0,336.5 838.0,336.5 840.0,336.5 842.0,339.5 844.0,336.5 846.0,336.5 848.0,336.5 850.0,336.5 852.0,336.5 854.0,339.5 856.0,336.5 858.0,336.5 860.0,336.5 862.0,339.5 864.0,339.5 866.0,336.5 868.0,336.5 870.0,339.5 872.0,336.5 874.0,336.5 876.0,336.5 878.0,336.5 880.0,336.5 882.0,336.5 884.0,336.5 886.0,336.5 888.0,336.5 890.0,336.5 892.0,336.5 894.0,336.5 896.0,339.5 898.0,336.5 900.0,336.5 902.0,336.5 904.0,336.5 906.0,336.5 908.0,336.5 910.0,339.5 912.0,342.5 914.0,339.5 916.0,339.5 918.0,339.5 920.0,339.5 922.0,339.5 924.0,339.5 926.0,339.5 928.0,339.5 930.0,339.5 932.0,339.5 934.0,339.5 936.0,339.5 938.0,339.5 940.0,339.5 942.0,339.5 944.0,339.5 946.0,339.5 948.0,339.5 950.0,339.5 952.0,339.5 954.0,339.5 956.0,339.5 958.0,339.5 960.0,339.5 962.0,339.5 964.0,339.5 966.0,339.5 968.0,339.5 970.0,339.5 972.0,339.5 974.0,339.5 976.0,339.5 978.0,339.5 980.0,339.5 982.0,339.5 984.0,339.5 986.0,339.5 988.0,339.5 990.0,339.5 992.0,339.5 994.0,339.5 996.0,339.5 998.0,339.5 1000.0,339.5 1002.0,339.5 1004.0,339.5 1006.0,339.5 1008.0,339.5 1010.0,342.5 1012.0,339.5 1014.0,339.5 1016.0,339.5 1018.0,339.5 1020.0,339.5 1022.0,339.5 1024.0,339.5 1026.0,339.5 1028.0,339.5 1030.0,339.5 1032.0,339.5 1034.0,339.5 1036.0,339.5 1038.0,339.5 1040.0,339.5 1042.0,339.5 1044.0,339.5 1046.0,339.5 1048.0,339.5 1050.0,339.5 1052.0,339.5 1054.0,339.5 1056.0,339.5 1058.0,339.5 1060.0,339.5 1062.0,339.5 1064.0,339.5 1066.0,339.5 1068.0,339.5 1070.0,339.5 1072.0,339.5 1074.0,339.5 1076.0,339.5 1078.0,339.5 1080.0,339.5 1082.0,339.5 1084.0,339.5 1086.0,339.5 1088.0,339.5 1090.0,339.5 1092.0,339.5 1094.0,339.5 1096.0,339.5 1098.0,339.5 1100.0,339.5 1102.0,339.5 1104.0,339.5 1106.0,339.5 1108.0,339.5 1110.0,339.5 1112.0,339.5 1114.0,339.5 1116.0,339.5 1118.0,339.5 1120.0,339.5 1122.0,339.5 1124.0,339.5 1126.0,339.5 1128.0,339.5 1130.0,339.5 1132.0,339.5 1134.0,339.5 1136.0,339.5 1138.0,339.5 1140.0,339.5 1142.0,339.5 1144.0,339.5 1146.0,339.5 1148.0,339.5 1150.0,339.5 1152.0,339.5 1154.0,339.5 1156.0,339.5 1158.0,339.5 1160.0,339.5 1162.0,339.5 1164.0,339.5 1166.0,339.5 1168.0,339.5 1170.0,339.5 1172.0,339.5 1174.0,339.5 1176.0,339.5 1178.0,339.5 1180.0,339.5 1182.0,339.5 1184.0,339.5 1186.0,339.5 1188.0,339.5 1190.0,339.5 1192.0,339.5 1194.0,339.5 1196.0,339.5 1198.0,339.5 1200.0,339.5 1202.0,339.5 1204.0,339.5 1206.0,339.5 1208.0,339.5 1210.0,339.5 1212.0,339.5 1214.0,339.5 1216.0,339.5 1218.0,339.5 1220.0,342.5 1222.0,339.5 1224.0,339.5 1226.0,339.5 1228.0,339.5 1230.0,339.5 1232.0,339.5 1234.0,339.5 1236.0,339.5 1238.0,342.5 1240.0,339.5 1242.0,339.5 1244.0,339.5 1246.0,339.5 1248.0,339.5 1250.0,339.5 1252.0,339.5 1254.0,339.5 1256.0,339.5 1258.0,339.5 1260.0,339.5 1262.0,339.5 1264.0,339.5 1266.0,339.5 1268.0,339.5 1270.0,339.5 1272.0,339.5 1274.0,339.5 1276.0,342.5 1278.0,339.5 1280.0,339.5 1282.0,339.5 1284.0,342.5 1286.0,342.5 1288.0,339.5 1290.0,339.5 1292.0,339.5 1294.0,339.5 1296.0,339.5 1298.0,339.5 1300.0,339.5 1302.0,339.5 1304.0,342.5 1306.0,339.5 1308.0,339.5 1310.0,339.5 1312.0,339.5 1314.0,339.5 1316.0,339.5 1318.0,339.5 1320.0,339.5 1322.0,339.5 1324.0,339.5 1326.0,339.5 1328.0,339.5 1330.0,339.5 1332.0,339.5 1334.0,339.5 1336.0,339.5 1338.0,339.5 1340.0,339.5 1342.0,339.5 1344.0,342.5 1346.0,339.5 1348.0,342.5 1350.0,339.5 1352.0,339.5 1354.0,342.5 1356.0,342.5 1358.0,339.5 1360.0,342.5 1362.0,339.5 1364.0,339.5 1366.0,342.5 1368.0,339.5 1370.0,342.5 1372.0,339.5 1374.0,339.5 1376.0,339.5 1378.0,339.5 1380.0,339.5 1382.0,339.5 1384.0,339.5 1386.0,339.5 1388.0,339.5 1390.0,339.5 1392.0,339.5 1394.0,339.5 1396.0,339.5 1398.0,342.5 1400.0,339.5 1402.0,339.5 1404.0,342.5 1406.0,342.5 1408.0,339.5 1410.0,339.5 1412.0,342.5 1414.0,339.5 1416.0,339.5 1418.0,339.5 1420.0,339.5 1422.0,342.5 1424.0,339.5 1426.0,339.5 1428.0,339.5 1430.0,342.5 1432.0,339.5 1434.0,339.5 1436.0,342.5 1438.0,342.5 1440.0,339.5 1442.0,339.5 1444.0,339.5 1446.0,342.5 1448.0,342.5 1450.0,339.5 1452.0,339.5 1454.0,342.5 1456.0,339.5 1458.0,342.5 1460.0,339.5 1462.0,339.5 1464.0,339.5 1466.0,339.5 1468.0,342.5 1470.0,342.5 1472.0,339.5 1474.0,342.5 1476.0,339.5 1478.0,342.5 1480.0,339.5 1482.0,342.5 1484.0,339.5 1486.0,342.5 1488.0,339.5 1490.0,342.5 1492.0,339.5 1494.0,339.5 1496.0,339.5 1498.0,342.5 1500.0,339.5 1502.0,339.5 1504.0,339.5 1506.0,339.5 1508.0,339.5 1510.0,339.5 1512.0,339.5 1514.0,339.5 1516.0,339.5 1518.0,339.5 1520.0,339.5 1522.0,339.5 1524.0,339.5 1526.0,339.5 1528.0,339.5 1530.0,339.5 1532.0,339.5 1534.0,339.5 1536.0,339.5 1538.0,339.5 1540.0,339.5 1542.0,339.5 1544.0,339.5 1546.0,339.5 1548.0,339.5 1550.0,339.5 1552.0,339.5 1554.0,339.5 1556.0,339.5 1558.0,339.5 1560.0,339.5 1562.0,339.5 1564.0,339.5 1566.0,339.5 1568.0,339.5 1570.0,339.5 1572.0,339.5 1574.0,339.5 1576.0,339.5 1578.0,339.5 1580.0,339.5 1582.0,339.5 1584.0,339.5 1586.0,339.5 1588.0,339.5 1590.0,339.5 1592.0,339.5 1594.0,339.5 1596.0,339.5 1598.0,339.5 1600.0,339.5 1602.0,339.5 1604.0,339.5 1606.0,339.5 1608.0,339.5 1610.0,339.5 1612.0,339.5 1614.0,339.5 1616.0,339.5 1618.0,339.5 1620.0,339.5 1622.0,339.5 1624.0,339.5 1626.0,339.5 1628.0,339.5 1630.0,339.5 1632.0,339.5 1634.0,339.5 1636.0,339.5 1638.0,339.5 1640.0,339.5 1642.0,339.5 1644.0,339.5 1646.0,339.5 1648.0,339.5 1650.0,339.5 1652.0,339.5 1654.0,339.5 1656.0,339.5 1658.0,339.5 1660.0,339.5 1662.0,339.5 1664.0,339.5 1666.0,339.5 1668.0,339.5 1670.0,339.5 1672.0,339.5 1674.0,339.5 1676.0,339.5 1678.0,339.5 1680.0,339.5 1682.0,339.5 1684.0,339.5 1686.0,339.5 1688.0,339.5 1690.0,339.5 1692.0,339.5 1694.0,339.5 1696.0,339.5 1698.0,339.5 1700.0,339.5 1702.0,339.5 1704.0,339.5 1706.0,339.5 1708.0,339.5 1710.0,339.5 1712.0,339.5 1714.0,339.5 1716.0,339.5 1718.0,339.5 1720.0,339.5 1722.0,339.5 1724.0,339.5 1726.0,339.5 1728.0,342.5 1730.0,339.5 1732.0,339.5 1734.0,339.5 1736.0,339.5 1738.0,339.5 1740.0,339.5 1742.0,339.5 1744.0,339.5 1746.0,339.5 1748.0,339.5 1750.0,339.5 1752.0,339.5 1754.0,339.5 1756.0,339.5 1758.0,339.5 1760.0,339.5 1762.0,339.5 1764.0,339.5 1766.0,339.5 1768.0,339.5 1770.0,339.5 1772.0,339.5 1774.0,339.5 1776.0,339.5 1778.0,339.5 1780.0,339.5 1782.0,339.5 1784.0,339.5 1786.0,339.5 1788.0,339.5 1790.0,339.5 1792.0,339.5 1794.0,339.5 1796.0,339.5 1798.0,339.5 1800.0,339.5 1802.0,339.5 1804.0,339.5 1806.0,339.5 1808.0,339.5 1810.0,339.5 1812.0,339.5 1814.0,339.5 1816.0,339.5 1818.0,339.5 1820.0,339.5 1822.0,339.5 1824.0,339.5 1826.0,339.5 1828.0,339.5 1830.0,342.5 1832.0,339.5 1834.0,339.5 1836.0,339.5 1838.0,339.5 1840.0,339.5 1842.0,339.5 1844.0,339.5 1846.0,339.5 1848.0,339.5 1850.0,339.5 1846.0,339.5 1848.5,343.0 1850.5,339.5 1852.5,339.5 1853.5,362.0 1853.5,421.0" fill="none" stroke="#bcd6ff" stroke-width="1"/>
<polyline points="418.5,434.0 418.5,414.0 419.5,373.0 420.5,349.0 421.5,344.0 422.5,343.5 424.0,343.5 428.5,349.5 432.5,343.5 435.0,346.0 437.5,343.5 446.0,343.5 448.5,339.5 451.5,343.5 452.5,343.5 454.5,339.5 466.5,339.5 470.0,336.5 472.0,339.5 478.5,339.5 481.0,337.0 483.0,339.5 485.0,337.0 487.5,339.5 490.0,337.0 492.5,339.5 494.5,336.5 496.5,333.5 498.5,336.5 500.5,333.5 503.0,336.5 505.0,336.5 507.0,339.5 509.0,336.5 525.0,336.5 528.0,336.5 530.0,336.5 532.0,336.5 534.0,333.5 536.0,333.5 538.0,333.5 540.0,336.5 542.0,333.5 544.0,333.5 546.0,336.5 548.0,336.5 550.0,336.5 552.0,330.5 554.0,336.5 556.0,336.5 558.0,333.5 560.0,336.5 562.0,336.5 564.0,336.5 566.0,333.5 568.0,336.5 570.0,333.5 572.0,336.5 574.0,336.5 576.0,333.5 578.0,336.5 580.0,336.5 582.0,336.5 584.0,336.5 586.0,336.5 588.0,336.5 590.0,336.5 592.0,336.5 594.0,336.5 596.0,333.5 598.0,336.5 600.0,336.5 602.0,336.5 604.0,336.5 606.0,333.5 608.0,333.5 610.0,333.5 612.0,333.5 614.0,333.5 616.0,333.5 618.0,333.5 620.0,333.5 622.0,333.5 624.0,336.5 626.0,336.5 628.0,336.5 630.0,336.5 632.0,336.5 634.0,336.5 636.0,336.5 638.0,336.5 640.0,336.5 642.0,336.5 644.0,336.5 646.0,336.5 648.0,336.5 650.0,336.5 652.0,336.5 654.0,333.5 656.0,333.5 658.0,333.5 660.0,336.5 662.0,336.5 664.0,336.5 666.0,336.5 668.0,336.5 670.0,336.5 672.0,336.5 674.0,336.5 676.0,330.5 678.0,336.5 680.0,336.5 682.0,336.5 684.0,336.5 686.0,336.5 688.0,336.5 690.0,336.5 692.0,333.5 694.0,333.5 696.0,333.5 698.0,336.5 700.0,336.5 702.0,336.5 704.0,336.5 706.0,336.5 708.0,336.5 710.0,336.5 712.0,336.5 714.0,336.5 716.0,336.5 718.0,333.5 720.0,336.5 722.0,336.5 724.0,333.5 726.0,333.5 728.0,336.5 730.0,333.5 732.0,336.5 734.0,336.5 736.0,336.5 738.0,333.5 740.0,336.5 742.0,336.5 744.0,336.5 746.0,336.5 748.0,336.5 750.0,336.5 752.0,336.5 754.0,336.5 756.0,336.5 758.0,336.5 760.0,333.5 762.0,336.5 764.0,336.5 766.0,336.5 768.0,333.5 770.0,336.5 772.0,336.5 774.0,336.5 776.0,336.5 778.0,336.5 780.0,336.5 782.0,336.5 784.0,333.5 786.0,333.5 788.0,333.5 790.0,333.5 792.0,336.5 794.0,336.5 796.0,336.5 798.0,333.5 800.0,336.5 802.0,336.5 804.0,333.5 806.0,336.5 808.0,336.5 810.0,336.5 812.0,336.5 814.0,336.5 816.0,336.5 818.0,336.5 820.0,336.5 822.0,333.5 824.0,336.5 826.0,333.5 828.0,336.5 830.0,333.5 832.0,336.5 834.0,336.5 836.0,336.5 838.0,336.5 840.0,336.5 842.0,333.5 844.0,333.5 846.0,336.5 848.0,333.5 850.0,333.5 852.0,336.5 854.0,333.5 856.0,336.5 858.0,336.5 860.0,336.5 862.0,336.5 864.0,336.5 866.0,336.5 868.0,333.5 870.0,336.5 872.0,336.5 874.0,336.5 876.0,336.5 878.0,336.5 880.0,336.5 882.0,336.5 884.0,336.5 886.0,336.5 888.0,336.5 890.0,336.5 892.0,336.5 894.0,333.5 896.0,336.5 898.0,336.5 900.0,336.5 902.0,336.5 904.0,336.5 906.0,336.5 908.0,336.5 910.0,336.5 912.0,336.5 914.0,336.5 916.0,336.5 918.0,333.5 920.0,333.5 922.0,336.5 924.0,336.5 926.0,336.5 928.0,336.5 930.0,333.5 932.0,336.5 934.0,336.5 936.0,336.5 938.0,336.5 940.0,333.5 942.0,333.5 944.0,336.5 946.0,336.5 948.0,336.5 950.0,336.5 952.0,330.5 954.0,333.5 956.0,336.5 958.0,336.5 960.0,333.5 962.0,336.5 964.0,336.5 966.0,336.5 968.0,333.5 970.0,336.5 972.0,336.5 974.0,336.5 976.0,333.5 978.0,333.5 980.0,333.5 982.0,333.5 984.0,336.5 986.0,336.5 988.0,336.5 990.0,336.5 992.0,336.5 994.0,333.5 996.0,336.5 998.0,336.5 1000.0,336.5 1002.0,336.5 1004.0,336.5 1006.0,333.5 1008.0,336.5 1010.0,342.5 1012.0,336.5 1014.0,339.5 1016.0,339.5 1018.0,336.5 1020.0,339.5 1022.0,339.5 1024.0,336.5 1026.0,339.5 1028.0,336.5 1030.0,339.5 1032.0,339.5 1034.0,339.5 1036.0,339.5 1038.0,339.5 1040.0,336.5 1042.0,339.5 1044.0,339.5 1046.0,336.5 1048.0,336.5 1050.0,339.5 1052.0,339.5 1054.0,339.5 1056.0,336.5 1058.0,336.5 1060.0,339.5 1062.0,336.5 1064.0,336.5 1066.0,336.5 1068.0,339.5 1070.0,339.5 1072.0,339.5 1074.0,339.5 1076.0,336.5 1078.0,339.5 1080.0,336.5 1082.0,336.5 1084.0,336.5 1086.0,336.5 1088.0,339.5 1090.0,339.5 1092.0,336.5 1094.0,339.5 1096.0,336.5 1098.0,339.5 1100.0,339.5 1102.0,339.5 1104.0,339.5 1106.0,336.5 1108.0,339.5 1110.0,336.5 1112.0,336.5 1114.0,339.5 1116.0,336.5 1118.0,339.5 1120.0,339.5 1122.0,339.5 1124.0,339.5 1126.0,339.5 1128.0,339.5 1130.0,339.5 1132.0,339.5 1134.0,339.5 1136.0,339.5 1138.0,339.5 1140.0,339.5 1142.0,339.5 1144.0,339.5 1146.0,339.5 1148.0,336.5 1150.0,336.5 1152.0,336.5 1154.0,336.5 1156.0,339.5 1158.0,336.5 1160.0,339.5 1162.0,336.5 1164.0,336.5 1166.0,336.5 1168.0,339.5 1170.0,336.5 1172.0,336.5 1174.0,336.5 1176.0,339.5 1178.0,336.5 1180.0,339.5 1182.0,339.5 1184.0,339.5 1186.0,336.5 1188.0,339.5 1190.0,339.5 1192.0,336.5 1194.0,339.5 1196.0,333.5 1198.0,336.5 1200.0,339.5 1202.0,336.5 1204.0,339.5 1206.0,339.5 1208.0,339.5 1210.0,336.5 1212.0,336.5 1214.0,336.5 1216.0,339.5 1218.0,336.5 1220.0,339.5 1222.0,339.5 1224.0,339.5 1226.0,336.5 1228.0,339.5 1230.0,336.5 1232.0,336.5 1234.0,339.5 1236.0,339.5 1238.0,336.5 1240.0,339.5 1242.0,336.5 1244.0,336.5 1246.0,339.5 1248.0,339.5 1250.0,333.5 1252.0,339.5 1254.0,339.5 1256.0,333.5 1258.0,339.5 1260.0,339.5 1262.0,339.5 1264.0,336.5 1266.0,339.5 1268.0,336.5 1270.0,339.5 1272.0,339.5 1274.0,339.5 1276.0,342.5 1278.0,336.5 1280.0,339.5 1282.0,339.5 1284.0,339.5 1286.0,336.5 1288.0,336.5 1290.0,339.5 1292.0,339.5 1294.0,339.5 1296.0,336.5 1298.0,336.5 1300.0,339.5 1302.0,339.5 1304.0,339.5 1306.0,336.5 1308.0,336.5 1310.0,339.5 1312.0,339.5 1314.0,336.5 1316.0,339.5 1318.0,336.5 1320.0,336.5 1322.0,339.5 1324.0,339.5 1326.0,336.5 1328.0,339.5 1330.0,336.5 1332.0,339.5 1334.0,336.5 1336.0,339.5 1338.0,336.5 1340.0,336.5 1342.0,339.5 1344.0,339.5 1346.0,339.5 1348.0,339.5 1350.0,339.5 1352.0,339.5 1354.0,339.5 1356.0,339.5 1358.0,339.5 1360.0,339.5 1362.0,339.5 1364.0,339.5 1366.0,333.5 1368.0,336.5 1370.0,339.5 1372.0,339.5 1374.0,339.5 1376.0,336.5 1378.0,336.5 1380.0,339.5 1382.0,339.5 1384.0,339.5 1386.0,339.5 1388.0,339.5 1390.0,339.5 1392.0,339.5 1394.0,339.5 1396.0,339.5 1398.0,342.5 1400.0,339.5 1402.0,339.5 1404.0,339.5 1406.0,336.5 1408.0,339.5 1410.0,336.5 1412.0,339.5 1414.0,339.5 1416.0,336.5 1418.0,339.5 1420.0,339.5 1422.0,339.5 1424.0,339.5 1426.0,339.5 1428.0,339.5 1430.0,339.5 1432.0,339.5 1434.0,336.5 1436.0,339.5 1438.0,342.5 1440.0,339.5 1442.0,339.5 1444.0,339.5 1446.0,339.5 1448.0,339.5 1450.0,339.5 1452.0,339.5 1454.0,339.5 1456.0,339.5 1458.0,336.5 1460.0,339.5 1462.0,339.5 1464.0,339.5 1466.0,339.5 1468.0,339.5 1470.0,339.5 1472.0,339.5 1474.0,339.5 1476.0,339.5 1478.0,339.5 1480.0,339.5 1482.0,339.5 1484.0,339.5 1486.0,339.5 1488.0,339.5 1490.0,339.5 1492.0,339.5 1494.0,339.5 1496.0,339.5 1498.0,339.5 1500.0,339.5 1502.0,339.5 1504.0,339.5 1506.0,339.5 1508.0,339.5 1510.0,339.5 1512.0,339.5 1514.0,339.5 1516.0,339.5 1518.0,339.5 1520.0,339.5 1522.0,339.5 1524.0,339.5 1526.0,339.5 1528.0,339.5 1530.0,336.5 1532.0,339.5 1534.0,339.5 1536.0,336.5 1538.0,339.5 1540.0,339.5 1542.0,339.5 1544.0,339.5 1546.0,339.5 1548.0,336.5 1550.0,336.5 1552.0,336.5 1554.0,339.5 1556.0,339.5 1558.0,339.5 1560.0,336.5 1562.0,339.5 1564.0,339.5 1566.0,336.5 1568.0,336.5 1570.0,336.5 1572.0,339.5 1574.0,336.5 1576.0,339.5 1578.0,336.5 1580.0,336.5 1582.0,336.5 1584.0,336.5 1586.0,339.5 1588.0,339.5 1590.0,336.5 1592.0,336.5 1594.0,339.5 1596.0,336.5 1598.0,339.5 1600.0,336.5 1602.0,336.5 1604.0,339.5 1606.0,339.5 1608.0,339.5 1610.0,339.5 1612.0,339.5 1614.0,336.5 1616.0,339.5 1618.0,336.5 1620.0,339.5 1622.0,339.5 1624.0,339.5 1626.0,336.5 1628.0,336.5 1630.0,339.5 1632.0,333.5 1634.0,336.5 1636.0,339.5 1638.0,336.5 1640.0,336.5 1642.0,339.5 1644.0,339.5 1646.0,336.5 1648.0,339.5 1650.0,339.5 1652.0,336.5 1654.0,336.5 1656.0,336.5 1658.0,336.5 1660.0,336.5 1662.0,336.5 1664.0,336.5 1666.0,336.5 1668.0,336.5 1670.0,336.5 1672.0,336.5 1674.0,336.5 1676.0,336.5 1678.0,336.5 1680.0,336.5 1682.0,336.5 1684.0,336.5 1686.0,336.5 1688.0,336.5 1690.0,339.5 1692.0,339.5 1694.0,336.5 1696.0,336.5 1698.0,336.5 1700.0,336.5 1702.0,339.5 1704.0,336.5 1706.0,339.5 1708.0,339.5 1710.0,336.5 1712.0,339.5 1714.0,339.5 1716.0,339.5 1718.0,336.5 1720.0,336.5 1722.0,339.5 1724.0,339.5 1726.0,339.5 1728.0,336.5 1730.0,339.5 1732.0,336.5 1734.0,336.5 1736.0,339.5 1738.0,336.5 1740.0,339.5 1742.0,339.5 1744.0,336.5 1746.0,336.5 1748.0,339.5 1750.0,339.5 1752.0,336.5 1754.0,336.5 1756.0,339.5 1758.0,336.5 1760.0,339.5 1762.0,330.5 1764.0,336.5 1766.0,339.5 1768.0,339.5 1770.0,339.5 1772.0,339.5 1774.0,336.5 1776.0,336.5 1778.0,339.5 1780.0,339.5 1782.0,336.5 1784.0,339.5 1786.0,336.5 1788.0,339.5 1790.0,336.5 1792.0,336.5 1794.0,339.5 1796.0,336.5 1798.0,336.5 1800.0,336.5 1802.0,339.5 1804.0,336.5 1806.0,339.5 1808.0,336.5 1810.0,339.5 1812.0,339.5 1814.0,339.5 1816.0,336.5 1818.0,339.5 1820.0,339.5 1822.0,339.5 1824.0,339.5 1826.0,336.5 1828.0,339.5 1830.0,336.5 1832.0,339.5 1834.0,336.5 1836.0,339.5 1838.0,336.5 1840.0,339.5 1842.0,339.5 1844.0,336.5 1846.0,339.5 1848.0,336.5 1850.0,336.5 1852.5,339.5 1852.5,362.0 1853.5,363.0 1853.5,410.0 1854.5,411.0 1854.5,427.0" fill="none" stroke="#ff2a2a" stroke-width="1"/>
<rect x="420" y="235" width="1" height="3" fill="#ffffff"/>
<rect x="420" y="241" width="1" height="3" fill="#ffffff"/>
<rect x="420" y="247" width="1" height="3" fill="#ffffff"/>
<rect x="420" y="253" width="1" height="3" fill="#ffffff"/>
<rect x="420" y="259" width="1" height="3" fill="#ffffff"/>
<rect x="420" y="265" width="1" height="3" fill="#ffffff"/>
<rect x="420" y="271" width="1" height="3" fill="#ffffff"/>
<rect x="420" y="277" width="1" height="3" fill="#ffffff"/>
<rect x="420" y="283" width="1" height="3" fill="#ffffff"/>
<rect x="420" y="289" width="1" height="3" fill="#ffffff"/>
<rect x="420" y="295" width="1" height="3" fill="#ffffff"/>
<rect x="420" y="301" width="1" height="3" fill="#ffffff"/>
<rect x="420" y="307" width="1" height="3" fill="#ffffff"/>
<rect x="420" y="313" width="1" height="3" fill="#ffffff"/>
<rect x="420" y="319" width="1" height="3" fill="#ffffff"/>
<rect x="420" y="325" width="1" height="3" fill="#ffffff"/>
<rect x="420" y="331" width="1" height="3" fill="#ffffff"/>
<rect x="420" y="337" width="1" height="3" fill="#ffffff"/>
<rect x="420" y="343" width="1" height="3" fill="#ffffff"/>
<rect x="420" y="349" width="1" height="3" fill="#ffffff"/>
<rect x="420" y="355" width="1" height="3" fill="#ffffff"/>
<rect x="420" y="361" width="1" height="3" fill="#ffffff"/>
<rect x="420" y="367" width="1" height="3" fill="#ffffff"/>
<rect x="420" y="373" width="1" height="3" fill="#ffffff"/>
<rect x="420" y="379" width="1" height="3" fill="#ffffff"/>
<rect x="420" y="385" width="1" height="3" fill="#ffffff"/>
<rect x="420" y="391" width="1" height="3" fill="#ffffff"/>
<rect x="420" y="397" width="1" height="3" fill="#ffffff"/>
<rect x="420" y="403" width="1" height="3" fill="#ffffff"/>
<rect x="420" y="409" width="1" height="3" fill="#ffffff"/>
<rect x="420" y="415" width="1" height="3" fill="#ffffff"/>
<rect x="420" y="421" width="1" height="3" fill="#ffffff"/>
<rect x="420" y="427" width="1" height="3" fill="#ffffff"/>
<rect x="420" y="433" width="1" height="3" fill="#ffffff"/>
<rect x="420" y="439" width="1" height="3" fill="#ffffff"/>
<rect x="420" y="445" width="1" height="3" fill="#ffffff"/>
<rect x="420" y="451" width="1" height="3" fill="#ffffff"/>
<rect x="420" y="457" width="1" height="3" fill="#ffffff"/>
<rect x="420" y="463" width="1" height="3" fill="#ffffff"/>
<rect x="420" y="469" width="1" height="3" fill="#ffffff"/>
<rect x="420" y="475" width="1" height="3" fill="#ffffff"/>
<rect x="420" y="481" width="1" height="3" fill="#ffffff"/>
<rect x="420" y="487" width="1" height="3" fill="#ffffff"/>
<rect x="420" y="493" width="1" height="3" fill="#ffffff"/>
<rect x="420" y="499" width="1" height="3" fill="#ffffff"/>
<rect x="420" y="505" width="1" height="3" fill="#ffffff"/>
<rect x="420" y="511" width="1" height="3" fill="#ffffff"/>
<rect x="420" y="517" width="1" height="3" fill="#ffffff"/>
<rect x="420" y="523" width="1" height="3" fill="#ffffff"/>
<rect x="420" y="529" width="1" height="3" fill="#ffffff"/>
<rect x="420" y="535" width="1" height="3" fill="#ffffff"/>
<rect x="420" y="541" width="1" height="3" fill="#ffffff"/>
<rect x="420" y="547" width="1" height="3" fill="#ffffff"/>
<rect x="1854" y="235" width="1" height="18" fill="#ffffff"/>
<rect x="1854" y="259" width="1" height="18" fill="#ffffff"/>
<rect x="1854" y="283" width="1" height="18" fill="#ffffff"/>
<rect x="1854" y="307" width="1" height="18" fill="#ffffff"/>
<rect x="1854" y="331" width="1" height="18" fill="#ffffff"/>
<rect x="1854" y="355" width="1" height="18" fill="#ffffff"/>
<rect x="1854" y="379" width="1" height="18" fill="#ffffff"/>
<rect x="1854" y="403" width="1" height="18" fill="#ffffff"/>
<rect x="1854" y="427" width="1" height="18" fill="#ffffff"/>
<rect x="1854" y="451" width="1" height="18" fill="#ffffff"/>
<rect x="1854" y="475" width="1" height="18" fill="#ffffff"/>
<rect x="1854" y="499" width="1" height="18" fill="#ffffff"/>
<rect x="1854" y="523" width="1" height="18" fill="#ffffff"/>
<rect x="1854" y="547" width="1" height="4" fill="#ffffff"/>
<rect x="1902" y="580" width="1" height="4" fill="#d9d9d9"/>
<rect x="1903" y="581" width="2" height="2" fill="#f2f2f2"/>
<rect x="31" y="584" width="1874" height="375" fill="#000000"/>
<rect x="89" y="615" width="1" height="315" fill="#008000"/>
<rect x="99" y="615" width="1" height="315" fill="#008000"/>
<rect x="109" y="615" width="1" height="315" fill="#008000"/>
<rect x="119" y="615" width="1" height="315" fill="#008000"/>
<rect x="129" y="615" width="1" height="315" fill="#008000"/>
<rect x="139" y="615" width="1" height="315" fill="#008000"/>
<rect x="149" y="615" width="1" height="315" fill="#008000"/>
<rect x="159" y="615" width="1" height="315" fill="#008000"/>
<rect x="169" y="615" width="1" height="315" fill="#008000"/>
<rect x="179" y="615" width="1" height="315" fill="#008000"/>
<rect x="189" y="615" width="1" height="315" fill="#008000"/>
<rect x="199" y="615" width="1" height="315" fill="#008000"/>
<rect x="209" y="615" width="1" height="315" fill="#008000"/>
<rect x="219" y="615" width="1" height="315" fill="#008000"/>
<rect x="229" y="615" width="1" height="315" fill="#008000"/>
<rect x="239" y="615" width="1" height="315" fill="#008000"/>
<rect x="249" y="615" width="1" height="315" fill="#008000"/>
<rect x="259" y="615" width="1" height="315" fill="#008000"/>
<rect x="269" y="615" width="1" height="315" fill="#008000"/>
<rect x="279" y="615" width="1" height="315" fill="#008000"/>
<rect x="289" y="615" width="1" height="315" fill="#008000"/>
<rect x="299" y="615" width="1" height="315" fill="#008000"/>
<rect x="309" y="615" width="1" height="315" fill="#008000"/>
<rect x="319" y="615" width="1" height="315" fill="#008000"/>
<rect x="329" y="615" width="1" height="315" fill="#008000"/>
<rect x="339" y="615" width="1" height="315" fill="#008000"/>
<rect x="349" y="615" width="1" height="315" fill="#008000"/>
<rect x="359" y="615" width="1" height="315" fill="#008000"/>
<rect x="369" y="615" width="1" height="315" fill="#008000"/>
<rect x="379" y="615" width="1" height="315" fill="#008000"/>
<rect x="389" y="615" width="1" height="315" fill="#008000"/>
<rect x="399" y="615" width="1" height="315" fill="#008000"/>
<rect x="409" y="615" width="1" height="315" fill="#008000"/>
<rect x="419" y="615" width="1" height="315" fill="#008000"/>
<rect x="429" y="615" width="1" height="315" fill="#008000"/>
<rect x="439" y="615" width="1" height="315" fill="#008000"/>
<rect x="449" y="615" width="1" height="315" fill="#008000"/>
<rect x="459" y="615" width="1" height="315" fill="#008000"/>
<rect x="469" y="615" width="1" height="315" fill="#008000"/>
<rect x="479" y="615" width="1" height="315" fill="#008000"/>
<rect x="489" y="615" width="1" height="315" fill="#008000"/>
<rect x="499" y="615" width="1" height="315" fill="#008000"/>
<rect x="509" y="615" width="1" height="315" fill="#008000"/>
<rect x="519" y="615" width="1" height="315" fill="#008000"/>
<rect x="529" y="615" width="1" height="315" fill="#008000"/>
<rect x="539" y="615" width="1" height="315" fill="#008000"/>
<rect x="549" y="615" width="1" height="315" fill="#008000"/>
<rect x="559" y="615" width="1" height="315" fill="#008000"/>
<rect x="569" y="615" width="1" height="315" fill="#008000"/>
<rect x="579" y="615" width="1" height="315" fill="#008000"/>
<rect x="589" y="615" width="1" height="315" fill="#008000"/>
<rect x="599" y="615" width="1" height="315" fill="#008000"/>
<rect x="609" y="615" width="1" height="315" fill="#008000"/>
<rect x="619" y="615" width="1" height="315" fill="#008000"/>
<rect x="629" y="615" width="1" height="315" fill="#008000"/>
<rect x="639" y="615" width="1" height="315" fill="#008000"/>
<rect x="649" y="615" width="1" height="315" fill="#008000"/>
<rect x="659" y="615" width="1" height="315" fill="#008000"/>
<rect x="669" y="615" width="1" height="315" fill="#008000"/>
<rect x="679" y="615" width="1" height="315" fill="#008000"/>
<rect x="689" y="615" width="1" height="315" fill="#008000"/>
<rect x="699" y="615" width="1" height="315" fill="#008000"/>
<rect x="709" y="615" width="1" height="315" fill="#008000"/>
<rect x="719" y="615" width="1" height="315" fill="#008000"/>
<rect x="729" y="615" width="1" height="315" fill="#008000"/>
<rect x="739" y="615" width="1" height="315" fill="#008000"/>
<rect x="749" y="615" width="1" height="315" fill="#008000"/>
<rect x="759" y="615" width="1" height="315" fill="#008000"/>
<rect x="769" y="615" width="1" height="315" fill="#008000"/>
<rect x="779" y="615" width="1" height="315" fill="#008000"/>
<rect x="789" y="615" width="1" height="315" fill="#008000"/>
<rect x="799" y="615" width="1" height="315" fill="#008000"/>
<rect x="809" y="615" width="1" height="315" fill="#008000"/>
<rect x="819" y="615" width="1" height="315" fill="#008000"/>
<rect x="829" y="615" width="1" height="315" fill="#008000"/>
<rect x="839" y="615" width="1" height="315" fill="#008000"/>
<rect x="849" y="615" width="1" height="315" fill="#008000"/>
<rect x="859" y="615" width="1" height="315" fill="#008000"/>
<rect x="869" y="615" width="1" height="315" fill="#008000"/>
<rect x="879" y="615" width="1" height="315" fill="#008000"/>
<rect x="889" y="615" width="1" height="315" fill="#008000"/>
<rect x="899" y="615" width="1" height="315" fill="#008000"/>
<rect x="909" y="615" width="1" height="315" fill="#008000"/>
<rect x="919" y="615" width="1" height="315" fill="#008000"/>
<rect x="929" y="615" width="1" height="315" fill="#008000"/>
<rect x="939" y="615" width="1" height="315" fill="#008000"/>
<rect x="949" y="615" width="1" height="315" fill="#008000"/>
<rect x="959" y="615" width="1" height="315" fill="#008000"/>
<rect x="969" y="615" width="1" height="315" fill="#008000"/>
<rect x="979" y="615" width="1" height="315" fill="#008000"/>
<rect x="989" y="615" width="1" height="315" fill="#008000"/>
<rect x="999" y="615" width="1" height="315" fill="#008000"/>
<rect x="1009" y="615" width="1" height="315" fill="#008000"/>
<rect x="1019" y="615" width="1" height="315" fill="#008000"/>
<rect x="1029" y="615" width="1" height="315" fill="#008000"/>
<rect x="1039" y="615" width="1" height="315" fill="#008000"/>
<rect x="1049" y="615" width="1" height="315" fill="#008000"/>
<rect x="1059" y="615" width="1" height="315" fill="#008000"/>
<rect x="1069" y="615" width="1" height="315" fill="#008000"/>
<rect x="1079" y="615" width="1" height="315" fill="#008000"/>
<rect x="1089" y="615" width="1" height="315" fill="#008000"/>
<rect x="1099" y="615" width="1" height="315" fill="#008000"/>
<rect x="1109" y="615" width="1" height="315" fill="#008000"/>
<rect x="1119" y="615" width="1" height="315" fill="#008000"/>
<rect x="1129" y="615" width="1" height="315" fill="#008000"/>
<rect x="1139" y="615" width="1" height="315" fill="#008000"/>
<rect x="1149" y="615" width="1" height="315" fill="#008000"/>
<rect x="1159" y="615" width="1" height="315" fill="#008000"/>
<rect x="1169" y="615" width="1" height="315" fill="#008000"/>
<rect x="1179" y="615" width="1" height="315" fill="#008000"/>
<rect x="1189" y="615" width="1" height="315" fill="#008000"/>
<rect x="1199" y="615" width="1" height="315" fill="#008000"/>
<rect x="1209" y="615" width="1" height="315" fill="#008000"/>
<rect x="1219" y="615" width="1" height="315" fill="#008000"/>
<rect x="1229" y="615" width="1" height="315" fill="#008000"/>
<rect x="1239" y="615" width="1" height="315" fill="#008000"/>
<rect x="1249" y="615" width="1" height="315" fill="#008000"/>
<rect x="1259" y="615" width="1" height="315" fill="#008000"/>
<rect x="1269" y="615" width="1" height="315" fill="#008000"/>
<rect x="1279" y="615" width="1" height="315" fill="#008000"/>
<rect x="1289" y="615" width="1" height="315" fill="#008000"/>
<rect x="1299" y="615" width="1" height="315" fill="#008000"/>
<rect x="1309" y="615" width="1" height="315" fill="#008000"/>
<rect x="1319" y="615" width="1" height="315" fill="#008000"/>
<rect x="1329" y="615" width="1" height="315" fill="#008000"/>
<rect x="1339" y="615" width="1" height="315" fill="#008000"/>
<rect x="1349" y="615" width="1" height="315" fill="#008000"/>
<rect x="1359" y="615" width="1" height="315" fill="#008000"/>
<rect x="1369" y="615" width="1" height="315" fill="#008000"/>
<rect x="1379" y="615" width="1" height="315" fill="#008000"/>
<rect x="1389" y="615" width="1" height="315" fill="#008000"/>
<rect x="1399" y="615" width="1" height="315" fill="#008000"/>
<rect x="1409" y="615" width="1" height="315" fill="#008000"/>
<rect x="1419" y="615" width="1" height="315" fill="#008000"/>
<rect x="1429" y="615" width="1" height="315" fill="#008000"/>
<rect x="1439" y="615" width="1" height="315" fill="#008000"/>
<rect x="1449" y="615" width="1" height="315" fill="#008000"/>
<rect x="1459" y="615" width="1" height="315" fill="#008000"/>
<rect x="1469" y="615" width="1" height="315" fill="#008000"/>
<rect x="1479" y="615" width="1" height="315" fill="#008000"/>
<rect x="1489" y="615" width="1" height="315" fill="#008000"/>
<rect x="1499" y="615" width="1" height="315" fill="#008000"/>
<rect x="1509" y="615" width="1" height="315" fill="#008000"/>
<rect x="1519" y="615" width="1" height="315" fill="#008000"/>
<rect x="1529" y="615" width="1" height="315" fill="#008000"/>
<rect x="1539" y="615" width="1" height="315" fill="#008000"/>
<rect x="1549" y="615" width="1" height="315" fill="#008000"/>
<rect x="1559" y="615" width="1" height="315" fill="#008000"/>
<rect x="1569" y="615" width="1" height="315" fill="#008000"/>
<rect x="1579" y="615" width="1" height="315" fill="#008000"/>
<rect x="1589" y="615" width="1" height="315" fill="#008000"/>
<rect x="1599" y="615" width="1" height="315" fill="#008000"/>
<rect x="1609" y="615" width="1" height="315" fill="#008000"/>
<rect x="1619" y="615" width="1" height="315" fill="#008000"/>
<rect x="1629" y="615" width="1" height="315" fill="#008000"/>
<rect x="1639" y="615" width="1" height="315" fill="#008000"/>
<rect x="1649" y="615" width="1" height="315" fill="#008000"/>
<rect x="1659" y="615" width="1" height="315" fill="#008000"/>
<rect x="1669" y="615" width="1" height="315" fill="#008000"/>
<rect x="1679" y="615" width="1" height="315" fill="#008000"/>
<rect x="1689" y="615" width="1" height="315" fill="#008000"/>
<rect x="1699" y="615" width="1" height="315" fill="#008000"/>
<rect x="1709" y="615" width="1" height="315" fill="#008000"/>
<rect x="1719" y="615" width="1" height="315" fill="#008000"/>
<rect x="1729" y="615" width="1" height="315" fill="#008000"/>
<rect x="1739" y="615" width="1" height="315" fill="#008000"/>
<rect x="1749" y="615" width="1" height="315" fill="#008000"/>
<rect x="1759" y="615" width="1" height="315" fill="#008000"/>
<rect x="1769" y="615" width="1" height="315" fill="#008000"/>
<rect x="1779" y="615" width="1" height="315" fill="#008000"/>
<rect x="1789" y="615" width="1" height="315" fill="#008000"/>
<rect x="1799" y="615" width="1" height="315" fill="#008000"/>
<rect x="1809" y="615" width="1" height="315" fill="#008000"/>
<rect x="1819" y="615" width="1" height="315" fill="#008000"/>
<rect x="1829" y="615" width="1" height="315" fill="#008000"/>
<rect x="1839" y="615" width="1" height="315" fill="#008000"/>
<rect x="1849" y="615" width="1" height="315" fill="#008000"/>
<rect x="81" y="619" width="1774" height="1" fill="#008000"/>
<rect x="81" y="650" width="1774" height="1" fill="#008000"/>
<rect x="81" y="681" width="1774" height="1" fill="#008000"/>
<rect x="81" y="712" width="1774" height="1" fill="#008000"/>
<rect x="81" y="743" width="1774" height="1" fill="#008000"/>
<rect x="81" y="774" width="1774" height="1" fill="#008000"/>
<rect x="81" y="805" width="1774" height="1" fill="#008000"/>
<rect x="81" y="836" width="1774" height="1" fill="#008000"/>
<rect x="81" y="867" width="1774" height="1" fill="#008000"/>
<rect x="81" y="898" width="1774" height="1" fill="#008000"/>
<rect x="81" y="929" width="1774" height="1" fill="#008000"/>
<rect x="83" y="929" width="1772" height="1" fill="#00ff00"/>
<rect x="83" y="614" width="1762" height="1" fill="#ffff00"/>
<polyline points="1844.5,614.5 1844.5,690 1845.5,690 1845.5,800 1846.5,800 1846.5,917.5 1848.5,921.5 1849.5,905 1849.5,884 1850.5,882 1851.5,892 1851.5,900 1852.5,905 1853.5,912 1854.5,917 1855.5,918 1855.5,924" fill="none" stroke="#ffff00" stroke-width="1"/>
<g shape-rendering="auto">
<text x="895.8" y="603.8" font-size="11.5" fill="#ffff00" textLength="55" lengthAdjust="spacingAndGlyphs">CPU Usage</text>
<text x="957.6" y="603.8" font-size="11.5" fill="#e8e8e8" textLength="2" lengthAdjust="spacingAndGlyphs">|</text>
<text x="966.5" y="603.8" font-size="11.5" fill="#00ff00" textLength="73.9" lengthAdjust="spacingAndGlyphs">CPU Throttling</text>
<text x="50.8" y="618.8" font-size="11.5" fill="#ffffff" textLength="26" lengthAdjust="spacingAndGlyphs">100%</text>
<text x="62" y="934.1" font-size="11.5" fill="#ffffff" textLength="15" lengthAdjust="spacingAndGlyphs">0%</text>
<text x="1858.2" y="928.2" font-size="11.5" fill="#ffff00" textLength="14.8" lengthAdjust="spacingAndGlyphs">2%</text>
<text x="1875.3" y="934.2" font-size="11.5" fill="#00ff00" textLength="14.7" lengthAdjust="spacingAndGlyphs">0%</text>
</g>
<g shape-rendering="auto">
<text x="31.2" y="989.8" font-size="12.5" fill="#000" textLength="99.2" lengthAdjust="spacingAndGlyphs">Remaining Battery:</text>
<text x="245.5" y="989.8" font-size="12.5" fill="#000" textLength="62.9" lengthAdjust="spacingAndGlyphs">Test Started:</text>
<text x="484" y="989.8" font-size="12.5" fill="#000" textLength="72.6" lengthAdjust="spacingAndGlyphs">Elapsed Time:</text>
</g>
<rect x="143" y="974" width="80" height="24" fill="#000000"/>
<rect x="321" y="974" width="140" height="24" fill="#000000"/>
<rect x="569" y="974" width="80" height="24" fill="#000000"/>
<g shape-rendering="auto">
<text x="156.6" y="989" font-size="11.5" fill="#00ff00" textLength="53.5" lengthAdjust="spacingAndGlyphs">No battery</text>
<text x="334" y="989" font-size="11.5" fill="#00ff00" textLength="113.7" lengthAdjust="spacingAndGlyphs">2018-01-25 7:34:29 PM</text>
<text x="588" y="989" font-size="11.5" fill="#00ff00" textLength="40.9" lengthAdjust="spacingAndGlyphs">01:00:01</text>
</g>
<rect x="16" y="1020" width="73" height="21" fill="#adadad"/>
<rect x="17" y="1021" width="71" height="19" fill="#e1e1e1"/>
<g shape-rendering="auto">
<text x="40.1" y="1034.9" font-size="12.5" fill="#000" textLength="23.8" lengthAdjust="spacingAndGlyphs">Start</text>
</g>
<rect x="97" y="1020" width="73" height="21" fill="#bfbfbf"/>
<rect x="98" y="1021" width="71" height="19" fill="#cccccc"/>
<g shape-rendering="auto">
<text x="121.4" y="1034.9" font-size="12.5" fill="#838383" textLength="23.1" lengthAdjust="spacingAndGlyphs">Stop</text>
</g>
<rect x="201" y="1020" width="73" height="21" fill="#adadad"/>
<rect x="202" y="1021" width="71" height="19" fill="#e1e1e1"/>
<g shape-rendering="auto">
<text x="224.5" y="1034.9" font-size="12.5" fill="#000" textLength="26.8" lengthAdjust="spacingAndGlyphs">Clear</text>
</g>
<rect x="282" y="1020" width="73" height="21" fill="#005499"/>
<rect x="283" y="1021" width="71" height="19" fill="#cce4f7"/>
<g shape-rendering="auto">
<text x="306.2" y="1034.9" font-size="12.5" fill="#000" textLength="23.8" lengthAdjust="spacingAndGlyphs">Save</text>
</g>
<rect x="386" y="1020" width="73" height="21" fill="#adadad"/>
<rect x="387" y="1021" width="71" height="19" fill="#e1e1e1"/>
<g shape-rendering="auto">
<text x="405.2" y="1034.9" font-size="12.5" fill="#000" textLength="33.3" lengthAdjust="spacingAndGlyphs">CPUID</text>
</g>
<rect x="467" y="1020" width="73" height="21" fill="#adadad"/>
<rect x="468" y="1021" width="71" height="19" fill="#e1e1e1"/>
<g shape-rendering="auto">
<text x="473.2" y="1034.9" font-size="12.5" fill="#000" textLength="60.8" lengthAdjust="spacingAndGlyphs">Preferences</text>
</g>
<rect x="1847" y="1020" width="73" height="21" fill="#adadad"/>
<rect x="1848" y="1021" width="71" height="19" fill="#e1e1e1"/>
<g shape-rendering="auto">
<text x="1869" y="1034.9" font-size="12.5" fill="#000" textLength="29" lengthAdjust="spacingAndGlyphs">Close</text>
</g>
</svg>
</body></html>
